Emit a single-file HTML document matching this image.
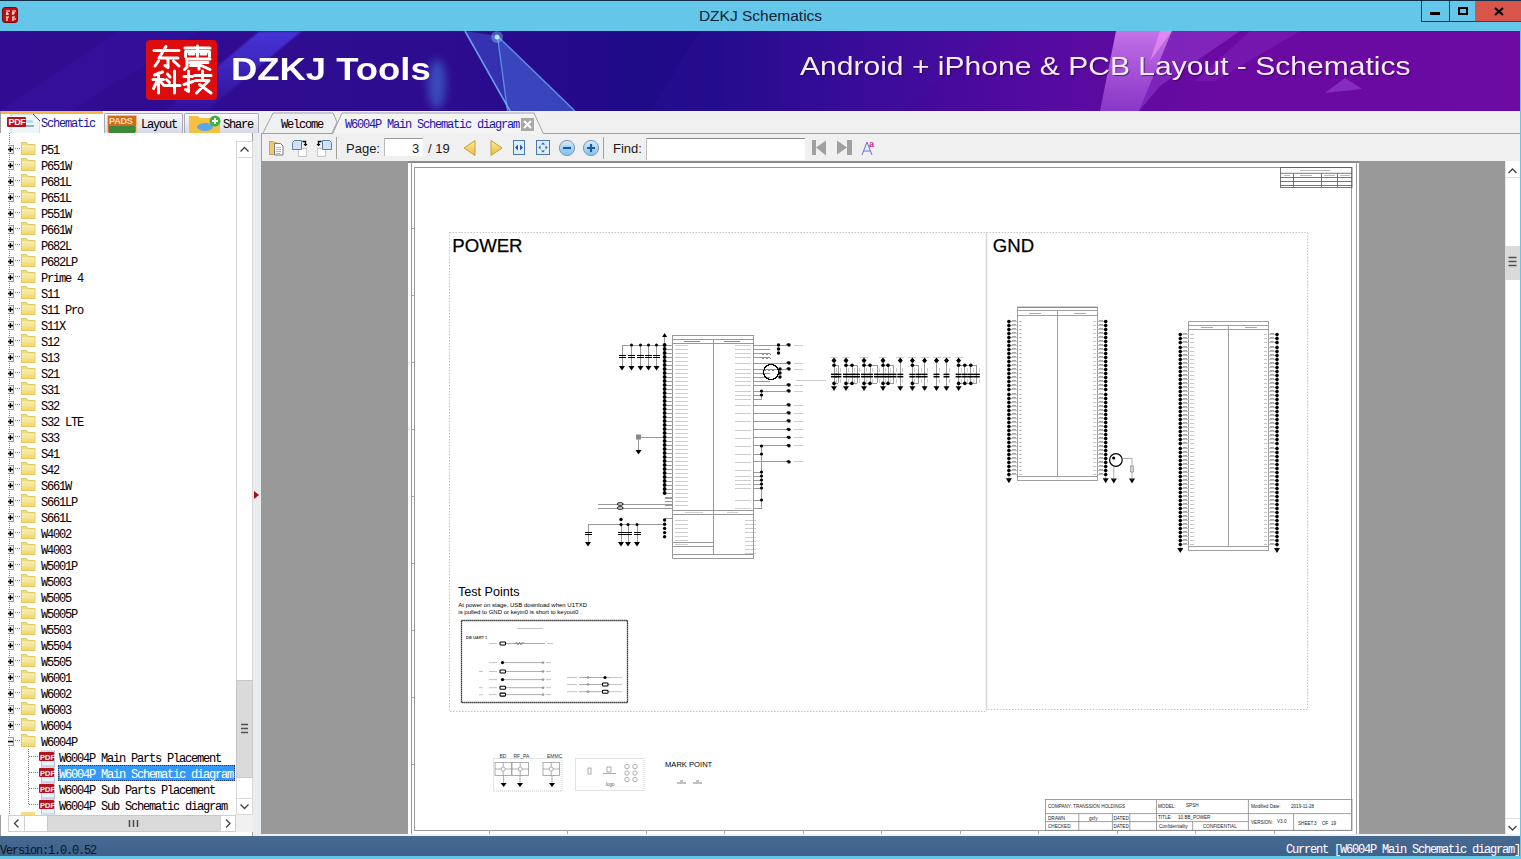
<!DOCTYPE html><html><head><meta charset="utf-8"><style>
*{box-sizing:border-box;margin:0;padding:0}
html,body{width:1521px;height:859px;overflow:hidden;background:#f0f0f0;font-family:"Liberation Sans",sans-serif}
.a{position:absolute}
.mono{font-family:"Liberation Mono",monospace;white-space:pre}
.tr{position:absolute;font-family:"Liberation Mono",monospace;font-size:12px;letter-spacing:-1.2px;color:#000;white-space:pre;line-height:14px;-webkit-text-stroke:.05px}
</style></head><body><div class="a" style="left:0;top:0;width:1521px;height:31px;background:#64c7ea;border-top:1px solid #10304a"></div>
<div class="a" style="left:2px;top:7px;width:16px;height:16px;background:#c40d12;border-radius:3px;border:1px solid #7a0a0a"></div>
<svg class="a" style="left:2px;top:7px" width="16" height="16"><g stroke="#fff" stroke-width="1.2" fill="none"><path d="M4 4h4M5 5v3M4 7h3M10 4h4M11 5v3M10 6h3M4 10h3M5 10v4M10 10h3M11 10v4M12 12h2"/></g></svg>
<div class="a" style="left:0;top:7.2px;width:1521px;text-align:center;font-size:15.5px;color:#0d2236">DZKJ Schematics</div>
<div class="a" style="left:1421px;top:1px;width:29px;height:21px;border:1px solid #0b3550;border-top:none"></div>
<div class="a" style="left:1449px;top:1px;width:27px;height:21px;border:1px solid #0b3550;border-top:none;border-left:none"></div>
<div class="a" style="left:1475px;top:1px;width:46px;height:21px;background:#d9554a;border-bottom:1px solid #7a2a20"></div>
<div class="a" style="left:1430px;top:12px;width:10px;height:3px;background:#000"></div>
<div class="a" style="left:1458px;top:7px;width:10px;height:8px;border:2px solid #000;border-top-width:2px"></div>
<svg class="a" style="left:1494px;top:7px" width="10" height="9"><path d="M1 1l8 7M9 1l-8 7" stroke="#000" stroke-width="2.2"/></svg>
<div class="a" style="left:0;top:31px;width:1520px;height:80px;overflow:hidden;background:linear-gradient(90deg,#310c92 0%,#2e0c90 28%,#260a8c 36%,#1f0a88 42%,#220a8a 47%,#380a96 56%,#540aa0 68%,#6a0aa2 80%,#6c0aa2 100%)">
<div class="a" style="left:428px;top:28px;width:18px;height:50px;border-radius:50%;background:rgba(70,150,240,.45);filter:blur(4px)"></div>
<div class="a" style="left:212px;top:0;width:42px;height:80px;background:linear-gradient(rgba(80,70,245,.7),rgba(60,40,220,.1));transform:skewX(-50deg);filter:blur(1.5px)"></div>
<svg class="a" style="left:0;top:0" width="1520" height="80">
<polygon points="465,0 510,80 575,80 497,5" fill="rgba(80,140,255,.30)"/>
<polygon points="497,5 507,80 575,80" fill="rgba(90,160,255,.18)"/>
<line x1="465" y1="0" x2="510" y2="80" stroke="rgba(120,190,255,.8)" stroke-width="1.6"/>
<line x1="497.5" y1="5" x2="575" y2="80" stroke="rgba(120,190,255,.65)" stroke-width="1.5"/>
<line x1="497.5" y1="5" x2="507.5" y2="80" stroke="rgba(120,190,255,.6)" stroke-width="1.3"/>
<circle cx="497" cy="6" r="6" fill="rgba(150,230,255,.35)"/><circle cx="497" cy="6" r="2.5" fill="rgba(210,250,255,.8)"/>

<defs><linearGradient id="lb" x1="0" y1="0" x2="0" y2="1"><stop offset="0" stop-color="rgba(230,150,255,.75)"/><stop offset="1" stop-color="rgba(190,110,245,.45)"/></linearGradient></defs>
<polygon points="1116,0 1172,0 1139,80 1100,80" fill="url(#lb)"/>
<polygon points="1160,0 1172,0 1150,30" fill="rgba(255,160,255,.5)"/>
<polygon points="1172,0 1240,0 1160,55 1139,80" fill="rgba(175,85,235,.35)"/>
<polygon points="1250,0 1300,0 1215,50 1195,50" fill="rgba(160,70,220,.22)"/>
<polygon points="1325,62 1362,58 1345,47" fill="rgba(175,95,235,.4)"/>
<polygon points="120,0 200,0 70,80 0,80" fill="rgba(70,40,210,.12)"/>
<polygon points="700,0 1000,0 900,80 650,80" fill="rgba(60,30,170,.12)"/>
</svg>
</div>
<div class="a" style="left:146px;top:40px;width:71px;height:60px;background:#dd0d0d;border-radius:4px"></div>
<svg class="a" style="left:0;top:0" width="230" height="110"><g stroke="#fff" stroke-width="3" fill="none" stroke-linecap="round" stroke-linejoin="round"><path d="M154 50.5H179M166 46.5L159 58H178M168 58V67.5L165 65.5M158.5 61L155 66M173.5 61L179 66"/><path d="M185 48H210M197.5 46V56M185.5 51.5V56.5M185.5 51.5H209.5V56.5M189 54H194M201 54H206M186.5 59H210M187 59V67L184.5 69.5M190 62.5H208M190.5 65.5H198M199 62.5V69M200 65L210 69.5"/><path d="M154.5 75L162.5 72M153 79.5H163.5M158.5 73V93M157.5 80.5L153.5 88.5M159.5 80.5L163.5 85M167.5 74L170 77M166.5 79.5L169.5 82.5M164.5 85.5H180M174.5 71V93"/><path d="M184 76.5H192.5M188.5 71V91.5L185.5 89.5M184 84.5L193 81.5M194.5 75.5H211M202.5 71V79M195.5 80.5H209L196.5 93M199.5 84.5L211 93"/></g></svg>
<div class="a" style="left:231px;top:52px;font-size:31px;font-weight:bold;color:#fff;white-space:nowrap;transform:scaleX(1.175);transform-origin:0 0" id="dzkj">DZKJ Tools</div>
<div class="a" style="left:800px;top:51px;font-size:26.5px;transform:scaleX(1.134);transform-origin:0 0;color:#f4ecf8;white-space:nowrap;text-shadow:1px 1px 1px rgba(40,0,60,.6)" id="andr">Android + iPhone &amp; PCB Layout - Schematics</div>
<div class="a" style="left:1520px;top:31px;width:1px;height:828px;background:#64c7ea"></div>
<div class="a" style="left:0;top:111px;width:1520px;height:22px;background:#f0f0f0"></div>
<div class="a" style="left:0;top:111px;width:104px;height:23px;background:#fff;border-left:1px solid #a0a0a0"></div>
<div class="a" style="left:1px;top:111px;width:102px;height:3px;background:#f4b63e"></div>
<svg class="a" style="left:6px;top:113px" width="34" height="21"><path d="M5 1h22l7 7v13H5z" fill="#eef6fc" stroke="#b8c8d8"/><path d="M27 1l7 7" stroke="#445" stroke-width="1"/><rect x="10" y="12" width="18" height="2" fill="#9ab"/><rect x="15" y="7" width="12" height="3" fill="#bde"/></svg>
<div class="a" style="left:7px;top:117px;width:19px;height:10px;background:#b8101c;border-radius:1px"></div>
<div class="a" style="left:8px;top:116.5px;width:18px;font-size:9px;font-weight:bold;color:#fff;line-height:10px;text-align:center;letter-spacing:-.3px">PDF</div>
<div class="tr" style="left:41px;top:117px;color:#1a1a9a">Schematic</div>
<div class="a" style="left:104px;top:113px;width:79px;height:20px;background:linear-gradient(#fbfbfd,#d6d9e6);border:1px solid #a8aab4;border-bottom:none;border-radius:2px 2px 0 0"></div>
<div class="a" style="left:107px;top:115px;width:30px;height:18px;background:#d2691e;border:1px solid #f5c080"></div>
<div class="a" style="left:109px;top:116px;font-size:9px;font-weight:bold;color:#fde0b0;line-height:10px;letter-spacing:-.2px">PADS</div>
<div class="a" style="left:109px;top:126px;width:26px;height:7px;background:#3a8a3a"></div>
<div class="tr" style="left:141px;top:118px">Layout</div>
<div class="a" style="left:184px;top:113px;width:75px;height:20px;background:linear-gradient(#fbfbfd,#d6d9e6);border:1px solid #a8aab4;border-bottom:none;border-radius:2px 2px 0 0"></div>
<svg class="a" style="left:189px;top:114px" width="34" height="19"><path d="M0 2h9l2 2h20v15H0z" fill="#f8c040"/><ellipse cx="16" cy="13" rx="8" ry="4" fill="#5aa8e8"/><circle cx="26" cy="7" r="5.5" fill="#3cb43c"/><path d="M26 4v6M23 7h6" stroke="#fff" stroke-width="2"/></svg>
<div class="tr" style="left:223px;top:118px">Share</div>
<svg class="a" style="left:255px;top:111px" width="300" height="24"><path d="M8 22 L18 2 H78 L82 11 L77 22" fill="#eef0f2" stroke="#a0a4a8" stroke-width="1"/><path d="M78 22 L87 2 H279 L288 22" fill="#f4f4f4" stroke="#a0a4a8" stroke-width="1"/><rect x="266" y="7" width="13" height="13" fill="#a8a8a8"/><path d="M269 10l7 7M276 10l-7 7" stroke="#fff" stroke-width="2"/></svg>
<div class="tr" style="left:281px;top:118px">Welcome</div>
<div class="tr" style="left:345px;top:118px;color:#1a1ab4">W6004P Main Schematic diagram</div>
<div class="a" style="left:0;top:133px;width:253px;height:703px;background:#fff;border-left:1px solid #a0a0a0;border-right:1px solid #a0a0a0"></div>
<div class="a" style="left:253px;top:133px;width:8px;height:703px;background:#e9edf0"></div>
<svg class="a" style="left:253px;top:490px" width="8" height="10"><path d="M1 1l5 4l-5 4z" fill="#a01018"/></svg>
<svg class="a" style="left:0;top:133px" width="236" height="682"><defs><linearGradient id="fg" x1="0" y1="0" x2="0" y2="1"><stop offset="0" stop-color="#fbf0b8"/><stop offset="1" stop-color="#f0d868"/></linearGradient></defs><line x1="9.5" y1="0" x2="9.5" y2="682" stroke="#808080" stroke-dasharray="1,1"/><rect x="5.5" y="12.5" width="8" height="8" fill="#f2f2f2" stroke="#9a9a9a"/><rect x="8" y="15.8" width="5" height="1.5" fill="#000"/><rect x="9.6" y="14" width="1.5" height="5" fill="#000"/><line x1="15" y1="15.5" x2="21" y2="15.5" stroke="#808080" stroke-dasharray="1,1"/><path d="M21.5 9.5 h5 l1.5 2 h7 v10 h-13.5z" fill="#f4dc7c" stroke="#e2c468" stroke-width="1"/><rect x="22" y="12.5" width="12.5" height="8.5" fill="url(#fg)"/><rect x="5.5" y="28.5" width="8" height="8" fill="#f2f2f2" stroke="#9a9a9a"/><rect x="8" y="31.8" width="5" height="1.5" fill="#000"/><rect x="9.6" y="30" width="1.5" height="5" fill="#000"/><line x1="15" y1="31.5" x2="21" y2="31.5" stroke="#808080" stroke-dasharray="1,1"/><path d="M21.5 25.5 h5 l1.5 2 h7 v10 h-13.5z" fill="#f4dc7c" stroke="#e2c468" stroke-width="1"/><rect x="22" y="28.5" width="12.5" height="8.5" fill="url(#fg)"/><rect x="5.5" y="44.5" width="8" height="8" fill="#f2f2f2" stroke="#9a9a9a"/><rect x="8" y="47.8" width="5" height="1.5" fill="#000"/><rect x="9.6" y="46" width="1.5" height="5" fill="#000"/><line x1="15" y1="47.5" x2="21" y2="47.5" stroke="#808080" stroke-dasharray="1,1"/><path d="M21.5 41.5 h5 l1.5 2 h7 v10 h-13.5z" fill="#f4dc7c" stroke="#e2c468" stroke-width="1"/><rect x="22" y="44.5" width="12.5" height="8.5" fill="url(#fg)"/><rect x="5.5" y="60.5" width="8" height="8" fill="#f2f2f2" stroke="#9a9a9a"/><rect x="8" y="63.8" width="5" height="1.5" fill="#000"/><rect x="9.6" y="62" width="1.5" height="5" fill="#000"/><line x1="15" y1="63.5" x2="21" y2="63.5" stroke="#808080" stroke-dasharray="1,1"/><path d="M21.5 57.5 h5 l1.5 2 h7 v10 h-13.5z" fill="#f4dc7c" stroke="#e2c468" stroke-width="1"/><rect x="22" y="60.5" width="12.5" height="8.5" fill="url(#fg)"/><rect x="5.5" y="76.5" width="8" height="8" fill="#f2f2f2" stroke="#9a9a9a"/><rect x="8" y="79.8" width="5" height="1.5" fill="#000"/><rect x="9.6" y="78" width="1.5" height="5" fill="#000"/><line x1="15" y1="79.5" x2="21" y2="79.5" stroke="#808080" stroke-dasharray="1,1"/><path d="M21.5 73.5 h5 l1.5 2 h7 v10 h-13.5z" fill="#f4dc7c" stroke="#e2c468" stroke-width="1"/><rect x="22" y="76.5" width="12.5" height="8.5" fill="url(#fg)"/><rect x="5.5" y="92.5" width="8" height="8" fill="#f2f2f2" stroke="#9a9a9a"/><rect x="8" y="95.8" width="5" height="1.5" fill="#000"/><rect x="9.6" y="94" width="1.5" height="5" fill="#000"/><line x1="15" y1="95.5" x2="21" y2="95.5" stroke="#808080" stroke-dasharray="1,1"/><path d="M21.5 89.5 h5 l1.5 2 h7 v10 h-13.5z" fill="#f4dc7c" stroke="#e2c468" stroke-width="1"/><rect x="22" y="92.5" width="12.5" height="8.5" fill="url(#fg)"/><rect x="5.5" y="108.5" width="8" height="8" fill="#f2f2f2" stroke="#9a9a9a"/><rect x="8" y="111.8" width="5" height="1.5" fill="#000"/><rect x="9.6" y="110" width="1.5" height="5" fill="#000"/><line x1="15" y1="111.5" x2="21" y2="111.5" stroke="#808080" stroke-dasharray="1,1"/><path d="M21.5 105.5 h5 l1.5 2 h7 v10 h-13.5z" fill="#f4dc7c" stroke="#e2c468" stroke-width="1"/><rect x="22" y="108.5" width="12.5" height="8.5" fill="url(#fg)"/><rect x="5.5" y="124.5" width="8" height="8" fill="#f2f2f2" stroke="#9a9a9a"/><rect x="8" y="127.8" width="5" height="1.5" fill="#000"/><rect x="9.6" y="126" width="1.5" height="5" fill="#000"/><line x1="15" y1="127.5" x2="21" y2="127.5" stroke="#808080" stroke-dasharray="1,1"/><path d="M21.5 121.5 h5 l1.5 2 h7 v10 h-13.5z" fill="#f4dc7c" stroke="#e2c468" stroke-width="1"/><rect x="22" y="124.5" width="12.5" height="8.5" fill="url(#fg)"/><rect x="5.5" y="140.5" width="8" height="8" fill="#f2f2f2" stroke="#9a9a9a"/><rect x="8" y="143.8" width="5" height="1.5" fill="#000"/><rect x="9.6" y="142" width="1.5" height="5" fill="#000"/><line x1="15" y1="143.5" x2="21" y2="143.5" stroke="#808080" stroke-dasharray="1,1"/><path d="M21.5 137.5 h5 l1.5 2 h7 v10 h-13.5z" fill="#f4dc7c" stroke="#e2c468" stroke-width="1"/><rect x="22" y="140.5" width="12.5" height="8.5" fill="url(#fg)"/><rect x="5.5" y="156.5" width="8" height="8" fill="#f2f2f2" stroke="#9a9a9a"/><rect x="8" y="159.8" width="5" height="1.5" fill="#000"/><rect x="9.6" y="158" width="1.5" height="5" fill="#000"/><line x1="15" y1="159.5" x2="21" y2="159.5" stroke="#808080" stroke-dasharray="1,1"/><path d="M21.5 153.5 h5 l1.5 2 h7 v10 h-13.5z" fill="#f4dc7c" stroke="#e2c468" stroke-width="1"/><rect x="22" y="156.5" width="12.5" height="8.5" fill="url(#fg)"/><rect x="5.5" y="172.5" width="8" height="8" fill="#f2f2f2" stroke="#9a9a9a"/><rect x="8" y="175.8" width="5" height="1.5" fill="#000"/><rect x="9.6" y="174" width="1.5" height="5" fill="#000"/><line x1="15" y1="175.5" x2="21" y2="175.5" stroke="#808080" stroke-dasharray="1,1"/><path d="M21.5 169.5 h5 l1.5 2 h7 v10 h-13.5z" fill="#f4dc7c" stroke="#e2c468" stroke-width="1"/><rect x="22" y="172.5" width="12.5" height="8.5" fill="url(#fg)"/><rect x="5.5" y="188.5" width="8" height="8" fill="#f2f2f2" stroke="#9a9a9a"/><rect x="8" y="191.8" width="5" height="1.5" fill="#000"/><rect x="9.6" y="190" width="1.5" height="5" fill="#000"/><line x1="15" y1="191.5" x2="21" y2="191.5" stroke="#808080" stroke-dasharray="1,1"/><path d="M21.5 185.5 h5 l1.5 2 h7 v10 h-13.5z" fill="#f4dc7c" stroke="#e2c468" stroke-width="1"/><rect x="22" y="188.5" width="12.5" height="8.5" fill="url(#fg)"/><rect x="5.5" y="204.5" width="8" height="8" fill="#f2f2f2" stroke="#9a9a9a"/><rect x="8" y="207.8" width="5" height="1.5" fill="#000"/><rect x="9.6" y="206" width="1.5" height="5" fill="#000"/><line x1="15" y1="207.5" x2="21" y2="207.5" stroke="#808080" stroke-dasharray="1,1"/><path d="M21.5 201.5 h5 l1.5 2 h7 v10 h-13.5z" fill="#f4dc7c" stroke="#e2c468" stroke-width="1"/><rect x="22" y="204.5" width="12.5" height="8.5" fill="url(#fg)"/><rect x="5.5" y="220.5" width="8" height="8" fill="#f2f2f2" stroke="#9a9a9a"/><rect x="8" y="223.8" width="5" height="1.5" fill="#000"/><rect x="9.6" y="222" width="1.5" height="5" fill="#000"/><line x1="15" y1="223.5" x2="21" y2="223.5" stroke="#808080" stroke-dasharray="1,1"/><path d="M21.5 217.5 h5 l1.5 2 h7 v10 h-13.5z" fill="#f4dc7c" stroke="#e2c468" stroke-width="1"/><rect x="22" y="220.5" width="12.5" height="8.5" fill="url(#fg)"/><rect x="5.5" y="236.5" width="8" height="8" fill="#f2f2f2" stroke="#9a9a9a"/><rect x="8" y="239.8" width="5" height="1.5" fill="#000"/><rect x="9.6" y="238" width="1.5" height="5" fill="#000"/><line x1="15" y1="239.5" x2="21" y2="239.5" stroke="#808080" stroke-dasharray="1,1"/><path d="M21.5 233.5 h5 l1.5 2 h7 v10 h-13.5z" fill="#f4dc7c" stroke="#e2c468" stroke-width="1"/><rect x="22" y="236.5" width="12.5" height="8.5" fill="url(#fg)"/><rect x="5.5" y="252.5" width="8" height="8" fill="#f2f2f2" stroke="#9a9a9a"/><rect x="8" y="255.8" width="5" height="1.5" fill="#000"/><rect x="9.6" y="254" width="1.5" height="5" fill="#000"/><line x1="15" y1="255.5" x2="21" y2="255.5" stroke="#808080" stroke-dasharray="1,1"/><path d="M21.5 249.5 h5 l1.5 2 h7 v10 h-13.5z" fill="#f4dc7c" stroke="#e2c468" stroke-width="1"/><rect x="22" y="252.5" width="12.5" height="8.5" fill="url(#fg)"/><rect x="5.5" y="268.5" width="8" height="8" fill="#f2f2f2" stroke="#9a9a9a"/><rect x="8" y="271.8" width="5" height="1.5" fill="#000"/><rect x="9.6" y="270" width="1.5" height="5" fill="#000"/><line x1="15" y1="271.5" x2="21" y2="271.5" stroke="#808080" stroke-dasharray="1,1"/><path d="M21.5 265.5 h5 l1.5 2 h7 v10 h-13.5z" fill="#f4dc7c" stroke="#e2c468" stroke-width="1"/><rect x="22" y="268.5" width="12.5" height="8.5" fill="url(#fg)"/><rect x="5.5" y="284.5" width="8" height="8" fill="#f2f2f2" stroke="#9a9a9a"/><rect x="8" y="287.8" width="5" height="1.5" fill="#000"/><rect x="9.6" y="286" width="1.5" height="5" fill="#000"/><line x1="15" y1="287.5" x2="21" y2="287.5" stroke="#808080" stroke-dasharray="1,1"/><path d="M21.5 281.5 h5 l1.5 2 h7 v10 h-13.5z" fill="#f4dc7c" stroke="#e2c468" stroke-width="1"/><rect x="22" y="284.5" width="12.5" height="8.5" fill="url(#fg)"/><rect x="5.5" y="300.5" width="8" height="8" fill="#f2f2f2" stroke="#9a9a9a"/><rect x="8" y="303.8" width="5" height="1.5" fill="#000"/><rect x="9.6" y="302" width="1.5" height="5" fill="#000"/><line x1="15" y1="303.5" x2="21" y2="303.5" stroke="#808080" stroke-dasharray="1,1"/><path d="M21.5 297.5 h5 l1.5 2 h7 v10 h-13.5z" fill="#f4dc7c" stroke="#e2c468" stroke-width="1"/><rect x="22" y="300.5" width="12.5" height="8.5" fill="url(#fg)"/><rect x="5.5" y="316.5" width="8" height="8" fill="#f2f2f2" stroke="#9a9a9a"/><rect x="8" y="319.8" width="5" height="1.5" fill="#000"/><rect x="9.6" y="318" width="1.5" height="5" fill="#000"/><line x1="15" y1="319.5" x2="21" y2="319.5" stroke="#808080" stroke-dasharray="1,1"/><path d="M21.5 313.5 h5 l1.5 2 h7 v10 h-13.5z" fill="#f4dc7c" stroke="#e2c468" stroke-width="1"/><rect x="22" y="316.5" width="12.5" height="8.5" fill="url(#fg)"/><rect x="5.5" y="332.5" width="8" height="8" fill="#f2f2f2" stroke="#9a9a9a"/><rect x="8" y="335.8" width="5" height="1.5" fill="#000"/><rect x="9.6" y="334" width="1.5" height="5" fill="#000"/><line x1="15" y1="335.5" x2="21" y2="335.5" stroke="#808080" stroke-dasharray="1,1"/><path d="M21.5 329.5 h5 l1.5 2 h7 v10 h-13.5z" fill="#f4dc7c" stroke="#e2c468" stroke-width="1"/><rect x="22" y="332.5" width="12.5" height="8.5" fill="url(#fg)"/><rect x="5.5" y="348.5" width="8" height="8" fill="#f2f2f2" stroke="#9a9a9a"/><rect x="8" y="351.8" width="5" height="1.5" fill="#000"/><rect x="9.6" y="350" width="1.5" height="5" fill="#000"/><line x1="15" y1="351.5" x2="21" y2="351.5" stroke="#808080" stroke-dasharray="1,1"/><path d="M21.5 345.5 h5 l1.5 2 h7 v10 h-13.5z" fill="#f4dc7c" stroke="#e2c468" stroke-width="1"/><rect x="22" y="348.5" width="12.5" height="8.5" fill="url(#fg)"/><rect x="5.5" y="364.5" width="8" height="8" fill="#f2f2f2" stroke="#9a9a9a"/><rect x="8" y="367.8" width="5" height="1.5" fill="#000"/><rect x="9.6" y="366" width="1.5" height="5" fill="#000"/><line x1="15" y1="367.5" x2="21" y2="367.5" stroke="#808080" stroke-dasharray="1,1"/><path d="M21.5 361.5 h5 l1.5 2 h7 v10 h-13.5z" fill="#f4dc7c" stroke="#e2c468" stroke-width="1"/><rect x="22" y="364.5" width="12.5" height="8.5" fill="url(#fg)"/><rect x="5.5" y="380.5" width="8" height="8" fill="#f2f2f2" stroke="#9a9a9a"/><rect x="8" y="383.8" width="5" height="1.5" fill="#000"/><rect x="9.6" y="382" width="1.5" height="5" fill="#000"/><line x1="15" y1="383.5" x2="21" y2="383.5" stroke="#808080" stroke-dasharray="1,1"/><path d="M21.5 377.5 h5 l1.5 2 h7 v10 h-13.5z" fill="#f4dc7c" stroke="#e2c468" stroke-width="1"/><rect x="22" y="380.5" width="12.5" height="8.5" fill="url(#fg)"/><rect x="5.5" y="396.5" width="8" height="8" fill="#f2f2f2" stroke="#9a9a9a"/><rect x="8" y="399.8" width="5" height="1.5" fill="#000"/><rect x="9.6" y="398" width="1.5" height="5" fill="#000"/><line x1="15" y1="399.5" x2="21" y2="399.5" stroke="#808080" stroke-dasharray="1,1"/><path d="M21.5 393.5 h5 l1.5 2 h7 v10 h-13.5z" fill="#f4dc7c" stroke="#e2c468" stroke-width="1"/><rect x="22" y="396.5" width="12.5" height="8.5" fill="url(#fg)"/><rect x="5.5" y="412.5" width="8" height="8" fill="#f2f2f2" stroke="#9a9a9a"/><rect x="8" y="415.8" width="5" height="1.5" fill="#000"/><rect x="9.6" y="414" width="1.5" height="5" fill="#000"/><line x1="15" y1="415.5" x2="21" y2="415.5" stroke="#808080" stroke-dasharray="1,1"/><path d="M21.5 409.5 h5 l1.5 2 h7 v10 h-13.5z" fill="#f4dc7c" stroke="#e2c468" stroke-width="1"/><rect x="22" y="412.5" width="12.5" height="8.5" fill="url(#fg)"/><rect x="5.5" y="428.5" width="8" height="8" fill="#f2f2f2" stroke="#9a9a9a"/><rect x="8" y="431.8" width="5" height="1.5" fill="#000"/><rect x="9.6" y="430" width="1.5" height="5" fill="#000"/><line x1="15" y1="431.5" x2="21" y2="431.5" stroke="#808080" stroke-dasharray="1,1"/><path d="M21.5 425.5 h5 l1.5 2 h7 v10 h-13.5z" fill="#f4dc7c" stroke="#e2c468" stroke-width="1"/><rect x="22" y="428.5" width="12.5" height="8.5" fill="url(#fg)"/><rect x="5.5" y="444.5" width="8" height="8" fill="#f2f2f2" stroke="#9a9a9a"/><rect x="8" y="447.8" width="5" height="1.5" fill="#000"/><rect x="9.6" y="446" width="1.5" height="5" fill="#000"/><line x1="15" y1="447.5" x2="21" y2="447.5" stroke="#808080" stroke-dasharray="1,1"/><path d="M21.5 441.5 h5 l1.5 2 h7 v10 h-13.5z" fill="#f4dc7c" stroke="#e2c468" stroke-width="1"/><rect x="22" y="444.5" width="12.5" height="8.5" fill="url(#fg)"/><rect x="5.5" y="460.5" width="8" height="8" fill="#f2f2f2" stroke="#9a9a9a"/><rect x="8" y="463.8" width="5" height="1.5" fill="#000"/><rect x="9.6" y="462" width="1.5" height="5" fill="#000"/><line x1="15" y1="463.5" x2="21" y2="463.5" stroke="#808080" stroke-dasharray="1,1"/><path d="M21.5 457.5 h5 l1.5 2 h7 v10 h-13.5z" fill="#f4dc7c" stroke="#e2c468" stroke-width="1"/><rect x="22" y="460.5" width="12.5" height="8.5" fill="url(#fg)"/><rect x="5.5" y="476.5" width="8" height="8" fill="#f2f2f2" stroke="#9a9a9a"/><rect x="8" y="479.8" width="5" height="1.5" fill="#000"/><rect x="9.6" y="478" width="1.5" height="5" fill="#000"/><line x1="15" y1="479.5" x2="21" y2="479.5" stroke="#808080" stroke-dasharray="1,1"/><path d="M21.5 473.5 h5 l1.5 2 h7 v10 h-13.5z" fill="#f4dc7c" stroke="#e2c468" stroke-width="1"/><rect x="22" y="476.5" width="12.5" height="8.5" fill="url(#fg)"/><rect x="5.5" y="492.5" width="8" height="8" fill="#f2f2f2" stroke="#9a9a9a"/><rect x="8" y="495.8" width="5" height="1.5" fill="#000"/><rect x="9.6" y="494" width="1.5" height="5" fill="#000"/><line x1="15" y1="495.5" x2="21" y2="495.5" stroke="#808080" stroke-dasharray="1,1"/><path d="M21.5 489.5 h5 l1.5 2 h7 v10 h-13.5z" fill="#f4dc7c" stroke="#e2c468" stroke-width="1"/><rect x="22" y="492.5" width="12.5" height="8.5" fill="url(#fg)"/><rect x="5.5" y="508.5" width="8" height="8" fill="#f2f2f2" stroke="#9a9a9a"/><rect x="8" y="511.8" width="5" height="1.5" fill="#000"/><rect x="9.6" y="510" width="1.5" height="5" fill="#000"/><line x1="15" y1="511.5" x2="21" y2="511.5" stroke="#808080" stroke-dasharray="1,1"/><path d="M21.5 505.5 h5 l1.5 2 h7 v10 h-13.5z" fill="#f4dc7c" stroke="#e2c468" stroke-width="1"/><rect x="22" y="508.5" width="12.5" height="8.5" fill="url(#fg)"/><rect x="5.5" y="524.5" width="8" height="8" fill="#f2f2f2" stroke="#9a9a9a"/><rect x="8" y="527.8" width="5" height="1.5" fill="#000"/><rect x="9.6" y="526" width="1.5" height="5" fill="#000"/><line x1="15" y1="527.5" x2="21" y2="527.5" stroke="#808080" stroke-dasharray="1,1"/><path d="M21.5 521.5 h5 l1.5 2 h7 v10 h-13.5z" fill="#f4dc7c" stroke="#e2c468" stroke-width="1"/><rect x="22" y="524.5" width="12.5" height="8.5" fill="url(#fg)"/><rect x="5.5" y="540.5" width="8" height="8" fill="#f2f2f2" stroke="#9a9a9a"/><rect x="8" y="543.8" width="5" height="1.5" fill="#000"/><rect x="9.6" y="542" width="1.5" height="5" fill="#000"/><line x1="15" y1="543.5" x2="21" y2="543.5" stroke="#808080" stroke-dasharray="1,1"/><path d="M21.5 537.5 h5 l1.5 2 h7 v10 h-13.5z" fill="#f4dc7c" stroke="#e2c468" stroke-width="1"/><rect x="22" y="540.5" width="12.5" height="8.5" fill="url(#fg)"/><rect x="5.5" y="556.5" width="8" height="8" fill="#f2f2f2" stroke="#9a9a9a"/><rect x="8" y="559.8" width="5" height="1.5" fill="#000"/><rect x="9.6" y="558" width="1.5" height="5" fill="#000"/><line x1="15" y1="559.5" x2="21" y2="559.5" stroke="#808080" stroke-dasharray="1,1"/><path d="M21.5 553.5 h5 l1.5 2 h7 v10 h-13.5z" fill="#f4dc7c" stroke="#e2c468" stroke-width="1"/><rect x="22" y="556.5" width="12.5" height="8.5" fill="url(#fg)"/><rect x="5.5" y="572.5" width="8" height="8" fill="#f2f2f2" stroke="#9a9a9a"/><rect x="8" y="575.8" width="5" height="1.5" fill="#000"/><rect x="9.6" y="574" width="1.5" height="5" fill="#000"/><line x1="15" y1="575.5" x2="21" y2="575.5" stroke="#808080" stroke-dasharray="1,1"/><path d="M21.5 569.5 h5 l1.5 2 h7 v10 h-13.5z" fill="#f4dc7c" stroke="#e2c468" stroke-width="1"/><rect x="22" y="572.5" width="12.5" height="8.5" fill="url(#fg)"/><rect x="5.5" y="588.5" width="8" height="8" fill="#f2f2f2" stroke="#9a9a9a"/><rect x="8" y="591.8" width="5" height="1.5" fill="#000"/><rect x="9.6" y="590" width="1.5" height="5" fill="#000"/><line x1="15" y1="591.5" x2="21" y2="591.5" stroke="#808080" stroke-dasharray="1,1"/><path d="M21.5 585.5 h5 l1.5 2 h7 v10 h-13.5z" fill="#f4dc7c" stroke="#e2c468" stroke-width="1"/><rect x="22" y="588.5" width="12.5" height="8.5" fill="url(#fg)"/><rect x="5.5" y="604.5" width="8" height="8" fill="#f2f2f2" stroke="#9a9a9a"/><rect x="8" y="607.8" width="5" height="1.5" fill="#000"/><line x1="15" y1="607.5" x2="21" y2="607.5" stroke="#808080" stroke-dasharray="1,1"/><path d="M21.5 601.5 h5 l1.5 2 h7 v10 h-13.5z" fill="#f4dc7c" stroke="#e2c468" stroke-width="1"/><rect x="22" y="604.5" width="12.5" height="8.5" fill="url(#fg)"/><rect x="0" y="0" width="8" height="682" fill="#fff"/><line x1="28.5" y1="616" x2="28.5" y2="672" stroke="#808080" stroke-dasharray="1,1"/><line x1="29" y1="623.5" x2="39" y2="623.5" stroke="#808080" stroke-dasharray="1,1"/><rect x="41.5" y="618" width="13" height="15" fill="#e8f2fa" stroke="#b0c4d8"/><rect x="39" y="619" width="15" height="9" fill="#b8101c" rx="1"/><text x="40" y="626.5" font-size="7.5" font-weight="bold" fill="#fff" font-family="Liberation Sans">PDF</text><line x1="29" y1="639.5" x2="39" y2="639.5" stroke="#808080" stroke-dasharray="1,1"/><rect x="41.5" y="634" width="13" height="15" fill="#e8f2fa" stroke="#b0c4d8"/><rect x="39" y="635" width="15" height="9" fill="#b8101c" rx="1"/><text x="40" y="642.5" font-size="7.5" font-weight="bold" fill="#fff" font-family="Liberation Sans">PDF</text><line x1="29" y1="655.5" x2="39" y2="655.5" stroke="#808080" stroke-dasharray="1,1"/><rect x="41.5" y="650" width="13" height="15" fill="#e8f2fa" stroke="#b0c4d8"/><rect x="39" y="651" width="15" height="9" fill="#b8101c" rx="1"/><text x="40" y="658.5" font-size="7.5" font-weight="bold" fill="#fff" font-family="Liberation Sans">PDF</text><line x1="29" y1="671.5" x2="39" y2="671.5" stroke="#808080" stroke-dasharray="1,1"/><rect x="41.5" y="666" width="13" height="15" fill="#e8f2fa" stroke="#b0c4d8"/><rect x="39" y="667" width="15" height="9" fill="#b8101c" rx="1"/><text x="40" y="674.5" font-size="7.5" font-weight="bold" fill="#fff" font-family="Liberation Sans">PDF</text></svg>
<div class="tr" style="left:41px;top:144px">P51</div>
<div class="tr" style="left:41px;top:160px">P651W</div>
<div class="tr" style="left:41px;top:176px">P681L</div>
<div class="tr" style="left:41px;top:192px">P651L</div>
<div class="tr" style="left:41px;top:208px">P551W</div>
<div class="tr" style="left:41px;top:224px">P661W</div>
<div class="tr" style="left:41px;top:240px">P682L</div>
<div class="tr" style="left:41px;top:256px">P682LP</div>
<div class="tr" style="left:41px;top:272px">Prime 4</div>
<div class="tr" style="left:41px;top:288px">S11</div>
<div class="tr" style="left:41px;top:304px">S11 Pro</div>
<div class="tr" style="left:41px;top:320px">S11X</div>
<div class="tr" style="left:41px;top:336px">S12</div>
<div class="tr" style="left:41px;top:352px">S13</div>
<div class="tr" style="left:41px;top:368px">S21</div>
<div class="tr" style="left:41px;top:384px">S31</div>
<div class="tr" style="left:41px;top:400px">S32</div>
<div class="tr" style="left:41px;top:416px">S32 LTE</div>
<div class="tr" style="left:41px;top:432px">S33</div>
<div class="tr" style="left:41px;top:448px">S41</div>
<div class="tr" style="left:41px;top:464px">S42</div>
<div class="tr" style="left:41px;top:480px">S661W</div>
<div class="tr" style="left:41px;top:496px">S661LP</div>
<div class="tr" style="left:41px;top:512px">S661L</div>
<div class="tr" style="left:41px;top:528px">W4002</div>
<div class="tr" style="left:41px;top:544px">W4003</div>
<div class="tr" style="left:41px;top:560px">W5001P</div>
<div class="tr" style="left:41px;top:576px">W5003</div>
<div class="tr" style="left:41px;top:592px">W5005</div>
<div class="tr" style="left:41px;top:608px">W5005P</div>
<div class="tr" style="left:41px;top:624px">W5503</div>
<div class="tr" style="left:41px;top:640px">W5504</div>
<div class="tr" style="left:41px;top:656px">W5505</div>
<div class="tr" style="left:41px;top:672px">W6001</div>
<div class="tr" style="left:41px;top:688px">W6002</div>
<div class="tr" style="left:41px;top:704px">W6003</div>
<div class="tr" style="left:41px;top:720px">W6004</div>
<div class="tr" style="left:41px;top:736px">W6004P</div>
<div class="a" style="left:58px;top:765px;width:177px;height:16px;background:#3399ff;border:1px dotted #1a3a70"></div>
<div class="tr" style="left:59px;top:752px;color:#000">W6004P Main Parts Placement</div>
<div class="tr" style="left:59px;top:768px;color:#fff">W6004P Main Schematic diagram</div>
<div class="tr" style="left:59px;top:784px;color:#000">W6004P Sub Parts Placement</div>
<div class="tr" style="left:59px;top:800px;color:#000">W6004P Sub Schematic diagram</div>
<svg class="a" style="left:15px;top:812px" width="20" height="3"><rect x="6" y="0" width="14" height="3" fill="#f6dd84"/></svg>
<div class="a" style="left:236px;top:141px;width:17px;height:674px;background:#fff;border:1px solid #d8d8d8"></div>
<div class="a" style="left:236px;top:141px;width:17px;height:17px;border:1px solid #d8d8d8;background:#fff"></div>
<svg class="a" style="left:236px;top:141px" width="17" height="17"><path d="M4.5 10.5l4-4l4 4" stroke="#404040" stroke-width="1.3" fill="none"/></svg>
<div class="a" style="left:236px;top:680px;width:17px;height:98px;background:#dadada;border:1px solid #c8c8c8"></div>
<svg class="a" style="left:236px;top:680px" width="17" height="98"><path d="M5 44.5h7M5 48.5h7M5 52.5h7" stroke="#505050" stroke-width="1.6"/></svg>
<div class="a" style="left:236px;top:798px;width:17px;height:17px;border:1px solid #d8d8d8;background:#fff"></div>
<svg class="a" style="left:236px;top:798px" width="17" height="17"><path d="M4.5 6.5l4 4l4-4" stroke="#404040" stroke-width="1.3" fill="none"/></svg>
<div class="a" style="left:8px;top:815px;width:228px;height:17px;background:#fff;border:1px solid #d0d0d0"></div>
<div class="a" style="left:8px;top:815px;width:17px;height:17px;border:1px solid #d0d0d0;background:#fff"></div>
<svg class="a" style="left:8px;top:815px" width="17" height="17"><path d="M10.5 4.5l-4 4l4 4" stroke="#404040" stroke-width="1.3" fill="none"/></svg>
<div class="a" style="left:47px;top:815px;width:174px;height:17px;background:#dadada;border:1px solid #c8c8c8"></div>
<svg class="a" style="left:47px;top:815px" width="174" height="17"><path d="M82.5 5v7M86.5 5v7M90.5 5v7" stroke="#505050" stroke-width="1.6"/></svg>
<div class="a" style="left:220px;top:815px;width:16px;height:17px;border:1px solid #d0d0d0;background:#fff"></div>
<svg class="a" style="left:220px;top:815px" width="16" height="17"><path d="M6 4.5l4 4l-4 4" stroke="#404040" stroke-width="1.3" fill="none"/></svg>
<div class="a" style="left:236px;top:815px;width:17px;height:17px;background:#f0f0f0"></div>
<div class="a" style="left:261px;top:133px;width:1259px;height:28px;background:#f0f0f0;border-left:1px solid #a0a0a0"></div>
<div class="a" style="left:261px;top:133px;width:72px;height:1px;background:#a0a0a0"></div>
<div class="a" style="left:543px;top:133px;width:977px;height:1px;background:#a0a0a0"></div>
<svg class="a" style="left:262px;top:133px" width="620" height="28"><defs><linearGradient id="zg" x1="0" y1="0" x2="0" y2="1"><stop offset="0" stop-color="#d8ecfa"/><stop offset="1" stop-color="#7cc0f0"/></linearGradient><linearGradient id="ag" x1="0" y1="0" x2="0" y2="1"><stop offset="0" stop-color="#f8e8a0"/><stop offset="1" stop-color="#e8c040"/></linearGradient></defs><path d="M7.5 8.5 h4 l1 1 h2 v12 h-7z" fill="#ecc878" stroke="#c9a456"/><path d="M12.5 10.5h6l2.5 2.5v9h-8.5z" fill="#fff" stroke="#7a7a7a"/><path d="M14 14.5h5M14 16.5h5M14 18.5h5M14 20.5h4" stroke="#9aa" stroke-width=".8"/><path d="M36.5 15.5h8v8h-8z" fill="#fff" stroke="#c4c4c4"/><path d="M30.5 9.5l2-2h7v9h-9z" fill="#cde2f6" stroke="#5b7fa8"/><path d="M40.5 8.5h3v3" stroke="#000" stroke-width="1.4" fill="none"/><path d="M41.5 11l2 2.5l2-2.5z" fill="#000"/><path d="M63.5 15.5h-8v8h8z" fill="#fff" stroke="#c4c4c4"/><path d="M69.5 9.5l-2-2h-7v9h9z" fill="#cde2f6" stroke="#5b7fa8"/><path d="M59.5 8.5h-3v3" stroke="#000" stroke-width="1.4" fill="none"/><path d="M58.5 11l-2 2.5l-2-2.5z" fill="#000"/><line x1="74.5" y1="4" x2="74.5" y2="26" stroke="#a0a0a0"/><rect x="122" y="5" width="39" height="18" fill="#fff"/><line x1="122" y1="5.5" x2="161" y2="5.5" stroke="#999"/><line x1="122.5" y1="5" x2="122.5" y2="23" stroke="#bbb"/><path d="M213 7.5 L202 15 L213 22.5z" fill="url(#ag)" stroke="#c8a030"/><path d="M229 7.5 L240 15 L229 22.5z" fill="url(#ag)" stroke="#c8a030"/><rect x="251.5" y="7.5" width="11" height="14" fill="#dceefa" stroke="#4a78b0"/><path d="M256 11.5l-3 3l3 3zM258 11.5l3 3l-3 3z" fill="#2a5a9a"/><rect x="274.5" y="7.5" width="13" height="14" fill="#dceefa" stroke="#4a78b0"/><path d="M281 9.5l-2 2h4zM281 19.5l-2-2h4zM276.5 14.5l2-2v4zM285.5 14.5l-2-2v4z" fill="#2a5a9a"/><circle cx="305" cy="15" r="7.6" fill="url(#zg)" stroke="#8098a8"/><path d="M301 15h8" stroke="#1a5aa0" stroke-width="2.2"/><circle cx="329" cy="15" r="7.6" fill="url(#zg)" stroke="#8098a8"/><path d="M325 15h8M329 11v8" stroke="#1a5aa0" stroke-width="2.2"/><line x1="341.5" y1="4" x2="341.5" y2="26" stroke="#a0a0a0"/><rect x="384" y="5" width="159" height="22" fill="#fff"/><line x1="384" y1="5.5" x2="543" y2="5.5" stroke="#888"/><line x1="384.5" y1="5" x2="384.5" y2="27" stroke="#bbb"/><path d="M550 7h4v15h-4zM554 14.5l10-7v15z" fill="#a0a0a0"/><path d="M575 7.5l10 7l-10 7zM585 7h5v15h-5z" fill="#a0a0a0"/><path d="M600 22l5-13l5 13M602 18h6" stroke="#6a6ae0" stroke-width="1" fill="none"/><text x="607" y="14" font-size="9" font-weight="bold" fill="#d02090" font-family="Liberation Sans">a</text></svg>
<div class="a" style="left:346px;top:141px;font-size:13px;color:#1a1a1a;white-space:nowrap">Page:</div>
<div class="a" style="left:412px;top:141px;font-size:13px;color:#1a1a1a;white-space:nowrap">3</div>
<div class="a" style="left:428px;top:141px;font-size:13px;color:#1a1a1a;white-space:nowrap">/ 19</div>
<div class="a" style="left:613px;top:141px;font-size:13px;color:#1a1a1a;white-space:nowrap">Find:</div>
<div class="a" style="left:261px;top:161px;width:1244px;height:673px;background:#999"></div>
<div class="a" style="left:261px;top:834px;width:1259px;height:2px;background:#eef2f6"></div>
<div class="a" style="left:1505px;top:161px;width:15px;height:673px;background:#fff;border-left:1px solid #e8e8e8"></div>
<svg class="a" style="left:1505px;top:161px" width="15" height="675"><path d="M3.5 12l4-4l4 4" stroke="#404040" stroke-width="1.3" fill="none"/><line x1="0" y1="16.5" x2="15" y2="16.5" stroke="#e0e0e0"/><rect x="0" y="85" width="15" height="34" fill="#dadada"/><path d="M3.5 96.5h8M3.5 100.5h8M3.5 104.5h8" stroke="#505050" stroke-width="1.6"/><line x1="0" y1="657.5" x2="15" y2="657.5" stroke="#e0e0e0"/><path d="M3.5 665l4 4l4-4" stroke="#404040" stroke-width="1.3" fill="none"/></svg>
<div class="a" style="left:408px;top:161px;width:951px;height:673px;background:#fff"></div>
<div class="a" style="left:408px;top:161px;width:951px;height:1px;background:#777"></div>
<svg class="a" style="left:408px;top:161px" width="951" height="673" viewBox="408 161 951 673"><rect x="408" y="161" width="951" height="673" fill="#fff"/><line x1="408" y1="162" x2="1359" y2="162" stroke="#8a8a8a" stroke-width="2"/><g fill="none" stroke="#9a9a9a" stroke-width="1"><path d="M411.5 162 V834 M1356.5 162 V834"/><rect x="414.5" y="167.5" width="937" height="663"/></g><g stroke="#aaa" stroke-width="1"><line x1="411" y1="228.5" x2="414" y2="228.5"/><line x1="411" y1="295.5" x2="414" y2="295.5"/><line x1="411" y1="362.5" x2="414" y2="362.5"/><line x1="411" y1="429.5" x2="414" y2="429.5"/><line x1="411" y1="496.5" x2="414" y2="496.5"/><line x1="411" y1="563.5" x2="414" y2="563.5"/><line x1="411" y1="630.5" x2="414" y2="630.5"/><line x1="411" y1="697.5" x2="414" y2="697.5"/><line x1="411" y1="764.5" x2="414" y2="764.5"/><line x1="489.5" y1="830" x2="489.5" y2="834"/><line x1="567.5" y1="830" x2="567.5" y2="834"/><line x1="646.5" y1="830" x2="646.5" y2="834"/><line x1="724.5" y1="830" x2="724.5" y2="834"/><line x1="803.5" y1="830" x2="803.5" y2="834"/><line x1="881.5" y1="830" x2="881.5" y2="834"/><line x1="960.5" y1="830" x2="960.5" y2="834"/><line x1="1038.5" y1="830" x2="1038.5" y2="834"/><line x1="1117.5" y1="830" x2="1117.5" y2="834"/><line x1="1195.5" y1="830" x2="1195.5" y2="834"/><line x1="1274.5" y1="830" x2="1274.5" y2="834"/></g><g fill="none" stroke="#555" stroke-width=".8"><rect x="1280.5" y="167.5" width="71.5" height="20"/><line x1="1280.5" y1="173.3" x2="1352" y2="173.3"/><line x1="1280.5" y1="177.5" x2="1352" y2="177.5"/><line x1="1280.5" y1="181.5" x2="1352" y2="181.5"/><line x1="1280.5" y1="185.5" x2="1352" y2="185.5"/><line x1="1293.5" y1="173.3" x2="1293.5" y2="187.5"/><line x1="1321.5" y1="173.3" x2="1321.5" y2="187.5"/><line x1="1337.5" y1="173.3" x2="1337.5" y2="187.5"/></g><g stroke="#999" stroke-width=".7"><line x1="1300" y1="170.5" x2="1330" y2="170.5"/><line x1="1284" y1="175.5" x2="1290" y2="175.5"/><line x1="1300" y1="175.5" x2="1312" y2="175.5"/><line x1="1324" y1="175.5" x2="1335" y2="175.5"/><line x1="1340" y1="175.5" x2="1350" y2="175.5"/></g><g fill="none" stroke="#c4c4c4" stroke-width="1" stroke-dasharray="1.5,1.5"><rect x="449.5" y="232.5" width="537" height="479"/><rect x="986.5" y="232.5" width="321" height="477"/></g><line x1="986.5" y1="233" x2="986.5" y2="711" stroke="#d8d8d8" stroke-width="1.5"/><text x="452.3" y="251.6" font-size="18.6" font-family="Liberation Sans" fill="#000" stroke="#000" stroke-width=".25">POWER</text><text x="992.8" y="252.2" font-size="18.6" font-family="Liberation Sans" fill="#000" stroke="#000" stroke-width=".25">GND</text><g fill="none" stroke="#cdcdcd" stroke-width="1" shape-rendering="crispEdges"><line x1="675" y1="345.3" x2="688" y2="345.3"/><line x1="675" y1="349.3" x2="688" y2="349.3"/><line x1="675" y1="353.3" x2="688" y2="353.3"/><line x1="675" y1="357.3" x2="688" y2="357.3"/><line x1="675" y1="361.3" x2="688" y2="361.3"/><line x1="675" y1="365.3" x2="688" y2="365.3"/><line x1="675" y1="369.3" x2="688" y2="369.3"/><line x1="675" y1="373.3" x2="688" y2="373.3"/><line x1="675" y1="377.3" x2="688" y2="377.3"/><line x1="675" y1="381.3" x2="688" y2="381.3"/><line x1="675" y1="385.3" x2="688" y2="385.3"/><line x1="675" y1="389.3" x2="688" y2="389.3"/><line x1="675" y1="393.3" x2="688" y2="393.3"/><line x1="675" y1="397.3" x2="688" y2="397.3"/><line x1="675" y1="401.3" x2="688" y2="401.3"/><line x1="675" y1="405.3" x2="688" y2="405.3"/><line x1="675" y1="409.3" x2="688" y2="409.3"/><line x1="675" y1="413.3" x2="688" y2="413.3"/><line x1="675" y1="417.3" x2="688" y2="417.3"/><line x1="675" y1="421.3" x2="688" y2="421.3"/><line x1="675" y1="425.3" x2="688" y2="425.3"/><line x1="675" y1="429.3" x2="688" y2="429.3"/><line x1="675" y1="433.3" x2="688" y2="433.3"/><line x1="675" y1="437.3" x2="688" y2="437.3"/><line x1="675" y1="441.3" x2="688" y2="441.3"/><line x1="675" y1="445.3" x2="688" y2="445.3"/><line x1="675" y1="449.3" x2="688" y2="449.3"/><line x1="675" y1="453.3" x2="688" y2="453.3"/><line x1="675" y1="457.3" x2="688" y2="457.3"/><line x1="675" y1="461.3" x2="688" y2="461.3"/><line x1="675" y1="465.3" x2="688" y2="465.3"/><line x1="675" y1="469.3" x2="688" y2="469.3"/><line x1="675" y1="473.3" x2="688" y2="473.3"/><line x1="675" y1="477.3" x2="688" y2="477.3"/><line x1="675" y1="481.3" x2="688" y2="481.3"/><line x1="675" y1="485.3" x2="688" y2="485.3"/><line x1="675" y1="489.3" x2="688" y2="489.3"/><line x1="675" y1="493.3" x2="688" y2="493.3"/><line x1="675" y1="497.3" x2="688" y2="497.3"/><line x1="675" y1="501.3" x2="688" y2="501.3"/><line x1="675" y1="505.3" x2="688" y2="505.3"/><line x1="735" y1="345.3" x2="751" y2="345.3"/><line x1="735" y1="349.3" x2="751" y2="349.3"/><line x1="735" y1="353.3" x2="751" y2="353.3"/><line x1="735" y1="357.3" x2="751" y2="357.3"/><line x1="735" y1="363.3" x2="751" y2="363.3"/><line x1="735" y1="369.3" x2="751" y2="369.3"/><line x1="735" y1="373.3" x2="751" y2="373.3"/><line x1="735" y1="377.3" x2="751" y2="377.3"/><line x1="735" y1="381.3" x2="751" y2="381.3"/><line x1="735" y1="385.3" x2="751" y2="385.3"/><line x1="735" y1="391.3" x2="751" y2="391.3"/><line x1="735" y1="395.3" x2="751" y2="395.3"/><line x1="735" y1="399.3" x2="751" y2="399.3"/><line x1="735" y1="405.3" x2="751" y2="405.3"/><line x1="735" y1="413.3" x2="751" y2="413.3"/><line x1="735" y1="421.3" x2="751" y2="421.3"/><line x1="735" y1="430.3" x2="751" y2="430.3"/><line x1="735" y1="438.3" x2="751" y2="438.3"/><line x1="735" y1="446.3" x2="751" y2="446.3"/><line x1="735" y1="454.3" x2="751" y2="454.3"/><line x1="735" y1="462.3" x2="751" y2="462.3"/><line x1="735" y1="470.3" x2="751" y2="470.3"/><line x1="735" y1="476.3" x2="751" y2="476.3"/><line x1="735" y1="480.3" x2="751" y2="480.3"/><line x1="735" y1="484.3" x2="751" y2="484.3"/><line x1="735" y1="488.3" x2="751" y2="488.3"/><line x1="735" y1="500.3" x2="751" y2="500.3"/><line x1="735" y1="508.3" x2="751" y2="508.3"/><path d="M684 341.5h16M724 341.5h16" stroke="#888"/><line x1="685" y1="512.2" x2="703" y2="512.2"/><line x1="727" y1="512.2" x2="738" y2="512.2"/><line x1="675" y1="520.3" x2="688" y2="520.3"/><line x1="675" y1="524.3" x2="688" y2="524.3"/><line x1="675" y1="528.3" x2="688" y2="528.3"/><line x1="675" y1="532.3" x2="688" y2="532.3"/><line x1="675" y1="536.3" x2="688" y2="536.3"/><line x1="675" y1="540.3" x2="688" y2="540.3"/><line x1="675" y1="544.3" x2="688" y2="544.3"/><line x1="745" y1="520.3" x2="756" y2="520.3"/><line x1="745" y1="524.5" x2="756" y2="524.5"/><line x1="745" y1="528.7" x2="756" y2="528.7"/><line x1="745" y1="532.9" x2="756" y2="532.9"/><line x1="745" y1="537.1" x2="756" y2="537.1"/><line x1="745" y1="541.3" x2="756" y2="541.3"/><line x1="745" y1="545.5" x2="756" y2="545.5"/><line x1="745" y1="549.7" x2="756" y2="549.7"/><line x1="745" y1="553.9" x2="756" y2="553.9"/><line x1="794" y1="345.0" x2="803" y2="345.0"/><line x1="794" y1="363.0" x2="803" y2="363.0"/><line x1="794" y1="369.0" x2="803" y2="369.0"/><line x1="794" y1="385.0" x2="803" y2="385.0"/><line x1="794" y1="391.0" x2="803" y2="391.0"/><line x1="794" y1="405.0" x2="803" y2="405.0"/><line x1="794" y1="413.0" x2="803" y2="413.0"/><line x1="794" y1="421.0" x2="803" y2="421.0"/><line x1="794" y1="429.6" x2="803" y2="429.6"/><line x1="794" y1="437.5" x2="803" y2="437.5"/><line x1="794" y1="445.7" x2="803" y2="445.7"/><line x1="794" y1="461.9" x2="803" y2="461.9"/><line x1="836.5" y1="368" x2="836.5" y2="372"/><line x1="836.5" y1="379" x2="836.5" y2="383"/><line x1="840.9" y1="368" x2="840.9" y2="372"/><line x1="840.9" y1="379" x2="840.9" y2="383"/><line x1="830.0" y1="357.5" x2="838.0" y2="357.5"/><line x1="848.5" y1="368" x2="848.5" y2="372"/><line x1="848.5" y1="379" x2="848.5" y2="383"/><line x1="854.5" y1="368" x2="854.5" y2="372"/><line x1="854.5" y1="379" x2="854.5" y2="383"/><line x1="859.5" y1="368" x2="859.5" y2="372"/><line x1="859.5" y1="379" x2="859.5" y2="383"/><line x1="842.0" y1="357.5" x2="850.0" y2="357.5"/><line x1="866.5" y1="368" x2="866.5" y2="372"/><line x1="866.5" y1="379" x2="866.5" y2="383"/><line x1="872.5" y1="368" x2="872.5" y2="372"/><line x1="872.5" y1="379" x2="872.5" y2="383"/><line x1="879.5" y1="368" x2="879.5" y2="372"/><line x1="879.5" y1="379" x2="879.5" y2="383"/><line x1="860.0" y1="357.5" x2="868.0" y2="357.5"/><line x1="885.5" y1="368" x2="885.5" y2="372"/><line x1="885.5" y1="379" x2="885.5" y2="383"/><line x1="890.5" y1="368" x2="890.5" y2="372"/><line x1="890.5" y1="379" x2="890.5" y2="383"/><line x1="896.0" y1="368" x2="896.0" y2="372"/><line x1="896.0" y1="379" x2="896.0" y2="383"/><line x1="879.0" y1="357.5" x2="887.0" y2="357.5"/><line x1="902.8" y1="368" x2="902.8" y2="372"/><line x1="902.8" y1="379" x2="902.8" y2="383"/><line x1="896.3" y1="357.5" x2="904.3" y2="357.5"/><line x1="914.9" y1="368" x2="914.9" y2="372"/><line x1="914.9" y1="379" x2="914.9" y2="383"/><line x1="921.2" y1="368" x2="921.2" y2="372"/><line x1="921.2" y1="379" x2="921.2" y2="383"/><line x1="908.4" y1="357.5" x2="916.4" y2="357.5"/><line x1="927.1" y1="368" x2="927.1" y2="372"/><line x1="927.1" y1="379" x2="927.1" y2="383"/><line x1="920.6" y1="357.5" x2="928.6" y2="357.5"/><line x1="939.0" y1="368" x2="939.0" y2="372"/><line x1="939.0" y1="379" x2="939.0" y2="383"/><line x1="932.5" y1="357.5" x2="940.5" y2="357.5"/><line x1="949.0" y1="368" x2="949.0" y2="372"/><line x1="949.0" y1="379" x2="949.0" y2="383"/><line x1="942.5" y1="357.5" x2="950.5" y2="357.5"/><line x1="961.1" y1="368" x2="961.1" y2="372"/><line x1="961.1" y1="379" x2="961.1" y2="383"/><line x1="967.3" y1="368" x2="967.3" y2="372"/><line x1="967.3" y1="379" x2="967.3" y2="383"/><line x1="973.3" y1="368" x2="973.3" y2="372"/><line x1="973.3" y1="379" x2="973.3" y2="383"/><line x1="979.3" y1="368" x2="979.3" y2="372"/><line x1="979.3" y1="379" x2="979.3" y2="383"/><line x1="954.6" y1="357.5" x2="962.6" y2="357.5"/><line x1="796" y1="380.5" x2="826" y2="380.5"/></g><g fill="none" stroke="#999" stroke-width="1" shape-rendering="crispEdges"><rect x="672.5" y="335.5" width="81" height="223"/><line x1="672.5" y1="339.3" x2="753.5" y2="339.3"/><line x1="672.5" y1="343.4" x2="753.5" y2="343.4"/><line x1="713.6" y1="339.3" x2="713.6" y2="554.5"/><line x1="672.5" y1="510.2" x2="753.5" y2="510.2"/><line x1="672.5" y1="514.2" x2="753.5" y2="514.2"/><line x1="672.5" y1="554.4" x2="753.5" y2="554.4"/><rect x="672.5" y="542" width="41" height="4"/><line x1="664.6" y1="345.0" x2="672.5" y2="345.0"/><line x1="664.6" y1="349.0" x2="672.5" y2="349.0"/><line x1="664.6" y1="353.0" x2="672.5" y2="353.0"/><line x1="664.6" y1="357.0" x2="672.5" y2="357.0"/><line x1="664.6" y1="361.0" x2="672.5" y2="361.0"/><line x1="664.6" y1="365.0" x2="672.5" y2="365.0"/><line x1="664.6" y1="369.0" x2="672.5" y2="369.0"/><line x1="664.6" y1="373.0" x2="672.5" y2="373.0"/><line x1="664.6" y1="377.0" x2="672.5" y2="377.0"/><line x1="664.6" y1="381.0" x2="672.5" y2="381.0"/><line x1="664.6" y1="385.0" x2="672.5" y2="385.0"/><line x1="664.6" y1="389.0" x2="672.5" y2="389.0"/><line x1="664.6" y1="393.0" x2="672.5" y2="393.0"/><line x1="664.6" y1="397.0" x2="672.5" y2="397.0"/><line x1="664.6" y1="401.0" x2="672.5" y2="401.0"/><line x1="664.6" y1="405.0" x2="672.5" y2="405.0"/><line x1="664.6" y1="409.0" x2="672.5" y2="409.0"/><line x1="664.6" y1="413.0" x2="672.5" y2="413.0"/><line x1="664.6" y1="417.0" x2="672.5" y2="417.0"/><line x1="664.6" y1="421.0" x2="672.5" y2="421.0"/><line x1="664.6" y1="425.0" x2="672.5" y2="425.0"/><line x1="664.6" y1="429.0" x2="672.5" y2="429.0"/><line x1="664.6" y1="433.0" x2="672.5" y2="433.0"/><line x1="664.6" y1="437.0" x2="672.5" y2="437.0"/><line x1="664.6" y1="441.0" x2="672.5" y2="441.0"/><line x1="664.6" y1="445.0" x2="672.5" y2="445.0"/><line x1="664.6" y1="449.0" x2="672.5" y2="449.0"/><line x1="664.6" y1="453.0" x2="672.5" y2="453.0"/><line x1="664.6" y1="457.0" x2="672.5" y2="457.0"/><line x1="664.6" y1="461.0" x2="672.5" y2="461.0"/><line x1="664.6" y1="465.0" x2="672.5" y2="465.0"/><line x1="664.6" y1="469.0" x2="672.5" y2="469.0"/><line x1="664.6" y1="473.0" x2="672.5" y2="473.0"/><line x1="664.6" y1="477.0" x2="672.5" y2="477.0"/><line x1="664.6" y1="481.0" x2="672.5" y2="481.0"/><line x1="664.6" y1="485.0" x2="672.5" y2="485.0"/><line x1="664.6" y1="489.0" x2="672.5" y2="489.0"/><line x1="664.6" y1="493.0" x2="672.5" y2="493.0"/><line x1="664.6" y1="497.0" x2="672.5" y2="497.0"/><line x1="664.6" y1="501.0" x2="672.5" y2="501.0"/><line x1="664.6" y1="505.0" x2="672.5" y2="505.0"/><line x1="664.6" y1="336" x2="664.6" y2="494"/><line x1="664.6" y1="498" x2="672.5" y2="498"/><line x1="622" y1="345" x2="664.6" y2="345"/><line x1="622.0" y1="345" x2="622.0" y2="368"/><line x1="631.5" y1="345" x2="631.5" y2="368"/><line x1="640.5" y1="345" x2="640.5" y2="368"/><line x1="648.5" y1="345" x2="648.5" y2="368"/><line x1="656.5" y1="345" x2="656.5" y2="368"/><line x1="753.5" y1="345.0" x2="790.0" y2="345.0"/><line x1="753.5" y1="349.0" x2="770.0" y2="349.0"/><line x1="753.5" y1="353.0" x2="770.0" y2="353.0"/><line x1="753.5" y1="357.0" x2="770.0" y2="357.0"/><line x1="753.5" y1="363.0" x2="790.0" y2="363.0"/><line x1="753.5" y1="369.0" x2="790.0" y2="369.0"/><line x1="753.5" y1="373.0" x2="770.0" y2="373.0"/><line x1="753.5" y1="377.0" x2="770.0" y2="377.0"/><line x1="753.5" y1="381.0" x2="770.0" y2="381.0"/><line x1="753.5" y1="385.0" x2="790.0" y2="385.0"/><line x1="753.5" y1="391.0" x2="790.0" y2="391.0"/><line x1="753.5" y1="405.0" x2="790.0" y2="405.0"/><line x1="753.5" y1="413.0" x2="790.0" y2="413.0"/><line x1="753.5" y1="421.0" x2="790.0" y2="421.0"/><line x1="753.5" y1="429.6" x2="790.0" y2="429.6"/><line x1="753.5" y1="437.5" x2="790.0" y2="437.5"/><line x1="753.5" y1="445.7" x2="790.0" y2="445.7"/><line x1="753.5" y1="461.9" x2="790.0" y2="461.9"/><line x1="761.5" y1="391" x2="761.5" y2="399"/><line x1="753.5" y1="395" x2="761.5" y2="395"/><line x1="753.5" y1="399" x2="761.5" y2="399"/><line x1="761.5" y1="446" x2="761.5" y2="508"/><line x1="753.5" y1="454.0" x2="761.5" y2="454.0"/><line x1="753.5" y1="472.0" x2="761.5" y2="472.0"/><line x1="753.5" y1="476.0" x2="761.5" y2="476.0"/><line x1="753.5" y1="480.0" x2="761.5" y2="480.0"/><line x1="753.5" y1="484.0" x2="761.5" y2="484.0"/><line x1="753.5" y1="488.0" x2="761.5" y2="488.0"/><line x1="753.5" y1="500.0" x2="761.5" y2="500.0"/><line x1="753.5" y1="508.0" x2="761.5" y2="508.0"/><circle cx="771" cy="372" r="7.5" stroke="#000" stroke-width="1.2"/><path d="M763 369 l2 2 l2 -2 l2 2 l2 -2 l2 2 l2 -2" stroke="#888"/><path d="M761 353 l2 2 l2 -2 l2 2 l2 -2 l2 2" stroke="#888"/><path d="M761 357 l2 2 l2 -2 l2 2 l2 -2 l2 2" stroke="#888"/><line x1="638.5" y1="437" x2="664.6" y2="437"/><line x1="638.5" y1="437" x2="638.5" y2="452"/><line x1="598" y1="504.0" x2="672.5" y2="504.0"/><line x1="598" y1="508.0" x2="672.5" y2="508.0"/><line x1="588" y1="524.6" x2="664.6" y2="524.6"/><line x1="588" y1="524.6" x2="588" y2="545"/><line x1="621.0" y1="524.6" x2="621.0" y2="545"/><line x1="628.0" y1="524.6" x2="628.0" y2="545"/><line x1="637.0" y1="524.6" x2="637.0" y2="545"/><line x1="664.6" y1="518" x2="672.5" y2="518"/><line x1="834.0" y1="360" x2="834.0" y2="388"/><line x1="834.0" y1="365.3" x2="838.4" y2="365.3"/><line x1="834.0" y1="383.4" x2="838.4" y2="383.4"/><line x1="838.4" y1="365.3" x2="838.4" y2="383.4"/><line x1="846.0" y1="360" x2="846.0" y2="388"/><line x1="846.0" y1="365.3" x2="857.0" y2="365.3"/><line x1="846.0" y1="383.4" x2="857.0" y2="383.4"/><line x1="857.0" y1="365.3" x2="857.0" y2="383.4"/><line x1="852.0" y1="365.3" x2="852.0" y2="383.4"/><line x1="864.0" y1="360" x2="864.0" y2="388"/><line x1="864.0" y1="365.3" x2="877.0" y2="365.3"/><line x1="864.0" y1="383.4" x2="877.0" y2="383.4"/><line x1="877.0" y1="365.3" x2="877.0" y2="383.4"/><line x1="870.0" y1="365.3" x2="870.0" y2="383.4"/><line x1="883.0" y1="360" x2="883.0" y2="388"/><line x1="883.0" y1="365.3" x2="893.5" y2="365.3"/><line x1="883.0" y1="383.4" x2="893.5" y2="383.4"/><line x1="893.5" y1="365.3" x2="893.5" y2="383.4"/><line x1="888.0" y1="365.3" x2="888.0" y2="383.4"/><line x1="900.3" y1="360" x2="900.3" y2="388"/><line x1="912.4" y1="360" x2="912.4" y2="388"/><line x1="912.4" y1="365.3" x2="918.7" y2="365.3"/><line x1="912.4" y1="383.4" x2="918.7" y2="383.4"/><line x1="918.7" y1="365.3" x2="918.7" y2="383.4"/><line x1="924.6" y1="360" x2="924.6" y2="388"/><line x1="936.5" y1="360" x2="936.5" y2="388"/><line x1="946.5" y1="360" x2="946.5" y2="388"/><line x1="958.6" y1="360" x2="958.6" y2="388"/><line x1="958.6" y1="365.3" x2="976.8" y2="365.3"/><line x1="958.6" y1="383.4" x2="976.8" y2="383.4"/><line x1="976.8" y1="365.3" x2="976.8" y2="383.4"/><line x1="964.8" y1="365.3" x2="964.8" y2="383.4"/><line x1="970.8" y1="365.3" x2="970.8" y2="383.4"/></g><g fill="#000" stroke="none"><circle cx="664.6" cy="345.0" r="1.9"/><circle cx="664.6" cy="349.0" r="1.9"/><circle cx="664.6" cy="353.0" r="1.9"/><circle cx="664.6" cy="357.0" r="1.9"/><circle cx="664.6" cy="361.0" r="1.9"/><circle cx="664.6" cy="365.0" r="1.9"/><circle cx="664.6" cy="369.0" r="1.9"/><circle cx="664.6" cy="373.0" r="1.9"/><circle cx="664.6" cy="377.0" r="1.9"/><circle cx="664.6" cy="381.0" r="1.9"/><circle cx="664.6" cy="385.0" r="1.9"/><circle cx="664.6" cy="389.0" r="1.9"/><circle cx="664.6" cy="393.0" r="1.9"/><circle cx="664.6" cy="397.0" r="1.9"/><circle cx="664.6" cy="401.0" r="1.9"/><circle cx="664.6" cy="405.0" r="1.9"/><circle cx="664.6" cy="409.0" r="1.9"/><circle cx="664.6" cy="413.0" r="1.9"/><circle cx="664.6" cy="417.0" r="1.9"/><circle cx="664.6" cy="421.0" r="1.9"/><circle cx="664.6" cy="425.0" r="1.9"/><circle cx="664.6" cy="429.0" r="1.9"/><circle cx="664.6" cy="433.0" r="1.9"/><circle cx="664.6" cy="437.0" r="1.9"/><circle cx="664.6" cy="441.0" r="1.9"/><circle cx="664.6" cy="445.0" r="1.9"/><circle cx="664.6" cy="449.0" r="1.9"/><circle cx="664.6" cy="453.0" r="1.9"/><circle cx="664.6" cy="457.0" r="1.9"/><circle cx="664.6" cy="461.0" r="1.9"/><circle cx="664.6" cy="465.0" r="1.9"/><circle cx="664.6" cy="469.0" r="1.9"/><circle cx="664.6" cy="473.0" r="1.9"/><circle cx="664.6" cy="477.0" r="1.9"/><circle cx="664.6" cy="481.0" r="1.9"/><circle cx="664.6" cy="485.0" r="1.9"/><circle cx="664.6" cy="489.0" r="1.9"/><circle cx="664.6" cy="493.0" r="1.9"/><path d="M664.6 333 l-2.5 4 h5z"/><path d="M618.5 355.0 h7 M618.5 357.2 h7" stroke="#000" stroke-width="1" shape-rendering="crispEdges"/><path d="M622.0 366.0 l-3 0 l3 4.5 l3 -4.5z"/><path d="M628.0 355.0 h7 M628.0 357.2 h7" stroke="#000" stroke-width="1" shape-rendering="crispEdges"/><path d="M631.5 366.0 l-3 0 l3 4.5 l3 -4.5z"/><path d="M637.0 355.0 h7 M637.0 357.2 h7" stroke="#000" stroke-width="1" shape-rendering="crispEdges"/><path d="M640.5 366.0 l-3 0 l3 4.5 l3 -4.5z"/><path d="M645.0 355.0 h7 M645.0 357.2 h7" stroke="#000" stroke-width="1" shape-rendering="crispEdges"/><path d="M648.5 366.0 l-3 0 l3 4.5 l3 -4.5z"/><path d="M653.0 355.0 h7 M653.0 357.2 h7" stroke="#000" stroke-width="1" shape-rendering="crispEdges"/><path d="M656.5 366.0 l-3 0 l3 4.5 l3 -4.5z"/><circle cx="631.5" cy="345.0" r="1.5"/><circle cx="640.5" cy="345.0" r="1.5"/><circle cx="648.5" cy="345.0" r="1.5"/><circle cx="656.5" cy="345.0" r="1.5"/><circle cx="789.0" cy="345.0" r="1.7"/><path d="M786.0 345.0 l4 0 l-2 -2 z"/><circle cx="789.0" cy="363.0" r="1.7"/><path d="M786.0 363.0 l4 0 l-2 -2 z"/><circle cx="789.0" cy="369.0" r="1.7"/><path d="M786.0 369.0 l4 0 l-2 -2 z"/><circle cx="789.0" cy="385.0" r="1.7"/><path d="M786.0 385.0 l4 0 l-2 -2 z"/><circle cx="789.0" cy="391.0" r="1.7"/><path d="M786.0 391.0 l4 0 l-2 -2 z"/><circle cx="789.0" cy="405.0" r="1.7"/><path d="M786.0 405.0 l4 0 l-2 -2 z"/><circle cx="789.0" cy="413.0" r="1.7"/><path d="M786.0 413.0 l4 0 l-2 -2 z"/><circle cx="789.0" cy="421.0" r="1.7"/><path d="M786.0 421.0 l4 0 l-2 -2 z"/><circle cx="789.0" cy="429.6" r="1.7"/><path d="M786.0 429.6 l4 0 l-2 -2 z"/><circle cx="789.0" cy="437.5" r="1.7"/><path d="M786.0 437.5 l4 0 l-2 -2 z"/><circle cx="789.0" cy="445.7" r="1.7"/><path d="M786.0 445.7 l4 0 l-2 -2 z"/><circle cx="789.0" cy="461.9" r="1.7"/><path d="M786.0 461.9 l4 0 l-2 -2 z"/><circle cx="778.5" cy="345.0" r="1.7"/><circle cx="778.5" cy="349.0" r="1.7"/><circle cx="778.5" cy="353.0" r="1.7"/><circle cx="780.0" cy="369.0" r="1.7"/><circle cx="780.0" cy="373.0" r="1.7"/><circle cx="780.0" cy="377.0" r="1.7"/><circle cx="761.5" cy="391.0" r="1.6"/><circle cx="761.5" cy="395.0" r="1.6"/><circle cx="761.5" cy="446.0" r="1.6"/><circle cx="761.5" cy="454.0" r="1.6"/><circle cx="761.5" cy="472.0" r="1.6"/><circle cx="761.5" cy="476.0" r="1.6"/><circle cx="761.5" cy="480.0" r="1.6"/><circle cx="761.5" cy="484.0" r="1.6"/><circle cx="761.5" cy="488.0" r="1.6"/><circle cx="761.5" cy="500.0" r="1.6"/><rect x="636" y="434.5" width="5" height="5" fill="#888"/><path d="M638.5 450.0 l-3 0 l3 4.5 l3 -4.5z"/><rect x="617.5" y="502.8" width="5.5" height="2.4" rx="1.2" fill="#fff" stroke="#000" stroke-width="1"/><rect x="617.5" y="506.8" width="5.5" height="2.4" rx="1.2" fill="#fff" stroke="#000" stroke-width="1"/><path d="M584.5 532.0 h7 M584.5 534.2 h7" stroke="#000" stroke-width="1" shape-rendering="crispEdges"/><path d="M588.0 542.0 l-3 0 l3 4.5 l3 -4.5z"/><path d="M617.5 532.0 h7 M617.5 534.2 h7" stroke="#000" stroke-width="1" shape-rendering="crispEdges"/><path d="M621.0 542.0 l-3 0 l3 4.5 l3 -4.5z"/><path d="M624.5 532.0 h7 M624.5 534.2 h7" stroke="#000" stroke-width="1" shape-rendering="crispEdges"/><path d="M628.0 542.0 l-3 0 l3 4.5 l3 -4.5z"/><path d="M633.5 532.0 h7 M633.5 534.2 h7" stroke="#000" stroke-width="1" shape-rendering="crispEdges"/><path d="M637.0 542.0 l-3 0 l3 4.5 l3 -4.5z"/><circle cx="621.0" cy="524.6" r="1.5"/><circle cx="628.0" cy="524.6" r="1.5"/><circle cx="637.0" cy="524.6" r="1.5"/><circle cx="621.0" cy="519.5" r="1.7"/><circle cx="664.6" cy="520.0" r="1.7"/><circle cx="664.6" cy="524.2" r="1.7"/><circle cx="664.6" cy="528.4" r="1.7"/><circle cx="664.6" cy="532.6" r="1.7"/><circle cx="664.6" cy="536.8" r="1.7"/><path d="M834.0 357.5 l-2.6 3.6 h5.2z"/><circle cx="834.0" cy="360.8" r="1.9"/><path d="M837.0 386.3 h-6 l3 4.6z"/><rect x="831.0" y="373.6" width="6" height="1.5"/><rect x="831.0" y="376" width="6" height="1.5"/><rect x="835.4" y="373.6" width="6" height="1.5"/><rect x="835.4" y="376" width="6" height="1.5"/><circle cx="834.0" cy="365.3" r="1.8"/><circle cx="834.0" cy="383.4" r="1.8"/><path d="M846.0 357.5 l-2.6 3.6 h5.2z"/><circle cx="846.0" cy="360.8" r="1.9"/><path d="M849.0 386.3 h-6 l3 4.6z"/><rect x="843.0" y="373.6" width="6" height="1.5"/><rect x="843.0" y="376" width="6" height="1.5"/><rect x="849.0" y="373.6" width="6" height="1.5"/><rect x="849.0" y="376" width="6" height="1.5"/><rect x="854.0" y="373.6" width="6" height="1.5"/><rect x="854.0" y="376" width="6" height="1.5"/><circle cx="846.0" cy="365.3" r="1.8"/><circle cx="846.0" cy="383.4" r="1.8"/><circle cx="852.0" cy="365.3" r="1.8"/><circle cx="852.0" cy="383.4" r="1.8"/><path d="M864.0 357.5 l-2.6 3.6 h5.2z"/><circle cx="864.0" cy="360.8" r="1.9"/><path d="M867.0 386.3 h-6 l3 4.6z"/><rect x="861.0" y="373.6" width="6" height="1.5"/><rect x="861.0" y="376" width="6" height="1.5"/><rect x="867.0" y="373.6" width="6" height="1.5"/><rect x="867.0" y="376" width="6" height="1.5"/><rect x="874.0" y="373.6" width="6" height="1.5"/><rect x="874.0" y="376" width="6" height="1.5"/><circle cx="864.0" cy="365.3" r="1.8"/><circle cx="864.0" cy="383.4" r="1.8"/><circle cx="870.0" cy="365.3" r="1.8"/><circle cx="870.0" cy="383.4" r="1.8"/><path d="M883.0 357.5 l-2.6 3.6 h5.2z"/><circle cx="883.0" cy="360.8" r="1.9"/><path d="M886.0 386.3 h-6 l3 4.6z"/><rect x="880.0" y="373.6" width="6" height="1.5"/><rect x="880.0" y="376" width="6" height="1.5"/><rect x="885.0" y="373.6" width="6" height="1.5"/><rect x="885.0" y="376" width="6" height="1.5"/><rect x="890.5" y="373.6" width="6" height="1.5"/><rect x="890.5" y="376" width="6" height="1.5"/><circle cx="883.0" cy="365.3" r="1.8"/><circle cx="883.0" cy="383.4" r="1.8"/><circle cx="888.0" cy="365.3" r="1.8"/><circle cx="888.0" cy="383.4" r="1.8"/><path d="M900.3 357.5 l-2.6 3.6 h5.2z"/><circle cx="900.3" cy="360.8" r="1.9"/><path d="M903.3 386.3 h-6 l3 4.6z"/><rect x="897.3" y="373.6" width="6" height="1.5"/><rect x="897.3" y="376" width="6" height="1.5"/><path d="M912.4 357.5 l-2.6 3.6 h5.2z"/><circle cx="912.4" cy="360.8" r="1.9"/><path d="M915.4 386.3 h-6 l3 4.6z"/><rect x="909.4" y="373.6" width="6" height="1.5"/><rect x="909.4" y="376" width="6" height="1.5"/><rect x="915.7" y="373.6" width="6" height="1.5"/><rect x="915.7" y="376" width="6" height="1.5"/><circle cx="912.4" cy="365.3" r="1.8"/><circle cx="912.4" cy="383.4" r="1.8"/><path d="M924.6 357.5 l-2.6 3.6 h5.2z"/><circle cx="924.6" cy="360.8" r="1.9"/><path d="M927.6 386.3 h-6 l3 4.6z"/><rect x="921.6" y="373.6" width="6" height="1.5"/><rect x="921.6" y="376" width="6" height="1.5"/><path d="M936.5 357.5 l-2.6 3.6 h5.2z"/><circle cx="936.5" cy="360.8" r="1.9"/><path d="M939.5 386.3 h-6 l3 4.6z"/><rect x="933.5" y="373.6" width="6" height="1.5"/><rect x="933.5" y="376" width="6" height="1.5"/><path d="M946.5 357.5 l-2.6 3.6 h5.2z"/><circle cx="946.5" cy="360.8" r="1.9"/><path d="M949.5 386.3 h-6 l3 4.6z"/><rect x="943.5" y="373.6" width="6" height="1.5"/><rect x="943.5" y="376" width="6" height="1.5"/><path d="M958.6 357.5 l-2.6 3.6 h5.2z"/><circle cx="958.6" cy="360.8" r="1.9"/><path d="M961.6 386.3 h-6 l3 4.6z"/><rect x="955.6" y="373.6" width="6" height="1.5"/><rect x="955.6" y="376" width="6" height="1.5"/><rect x="961.8" y="373.6" width="6" height="1.5"/><rect x="961.8" y="376" width="6" height="1.5"/><rect x="967.8" y="373.6" width="6" height="1.5"/><rect x="967.8" y="376" width="6" height="1.5"/><rect x="973.8" y="373.6" width="6" height="1.5"/><rect x="973.8" y="376" width="6" height="1.5"/><circle cx="958.6" cy="365.3" r="1.8"/><circle cx="958.6" cy="383.4" r="1.8"/><circle cx="964.8" cy="365.3" r="1.8"/><circle cx="964.8" cy="383.4" r="1.8"/><circle cx="970.8" cy="365.3" r="1.8"/><circle cx="970.8" cy="383.4" r="1.8"/></g><g fill="none" stroke="#a0a0a0" stroke-width="1" shape-rendering="crispEdges"><rect x="1017.3" y="307.0" width="80.3" height="173.7"/><line x1="1017.3" y1="310.8" x2="1097.6" y2="310.8"/><line x1="1017.3" y1="315.6" x2="1097.6" y2="315.6"/><line x1="1057.4" y1="310.8" x2="1057.4" y2="476.7"/><line x1="1017.3" y1="476.7" x2="1097.6" y2="476.7"/></g><g fill="none" stroke="#909090" stroke-width=".8"><line x1="1008.9" y1="321.5" x2="1008.9" y2="480.7"/><line x1="1105.7" y1="321.5" x2="1105.7" y2="480.7"/></g><g fill="none" stroke="#bdbdbd" stroke-width="1" shape-rendering="crispEdges"><line x1="1008.9" y1="321.5" x2="1017.3" y2="321.5"/><line x1="1097.6" y1="321.5" x2="1105.7" y2="321.5"/><line x1="1008.9" y1="325.5" x2="1017.3" y2="325.5"/><line x1="1097.6" y1="325.5" x2="1105.7" y2="325.5"/><line x1="1008.9" y1="329.5" x2="1017.3" y2="329.5"/><line x1="1097.6" y1="329.5" x2="1105.7" y2="329.5"/><line x1="1008.9" y1="333.5" x2="1017.3" y2="333.5"/><line x1="1097.6" y1="333.5" x2="1105.7" y2="333.5"/><line x1="1008.9" y1="337.5" x2="1017.3" y2="337.5"/><line x1="1097.6" y1="337.5" x2="1105.7" y2="337.5"/><line x1="1008.9" y1="341.5" x2="1017.3" y2="341.5"/><line x1="1097.6" y1="341.5" x2="1105.7" y2="341.5"/><line x1="1008.9" y1="345.5" x2="1017.3" y2="345.5"/><line x1="1097.6" y1="345.5" x2="1105.7" y2="345.5"/><line x1="1008.9" y1="349.5" x2="1017.3" y2="349.5"/><line x1="1097.6" y1="349.5" x2="1105.7" y2="349.5"/><line x1="1008.9" y1="353.5" x2="1017.3" y2="353.5"/><line x1="1097.6" y1="353.5" x2="1105.7" y2="353.5"/><line x1="1008.9" y1="357.5" x2="1017.3" y2="357.5"/><line x1="1097.6" y1="357.5" x2="1105.7" y2="357.5"/><line x1="1008.9" y1="361.5" x2="1017.3" y2="361.5"/><line x1="1097.6" y1="361.5" x2="1105.7" y2="361.5"/><line x1="1008.9" y1="365.5" x2="1017.3" y2="365.5"/><line x1="1097.6" y1="365.5" x2="1105.7" y2="365.5"/><line x1="1008.9" y1="369.5" x2="1017.3" y2="369.5"/><line x1="1097.6" y1="369.5" x2="1105.7" y2="369.5"/><line x1="1008.9" y1="373.5" x2="1017.3" y2="373.5"/><line x1="1097.6" y1="373.5" x2="1105.7" y2="373.5"/><line x1="1008.9" y1="377.5" x2="1017.3" y2="377.5"/><line x1="1097.6" y1="377.5" x2="1105.7" y2="377.5"/><line x1="1008.9" y1="381.5" x2="1017.3" y2="381.5"/><line x1="1097.6" y1="381.5" x2="1105.7" y2="381.5"/><line x1="1008.9" y1="385.5" x2="1017.3" y2="385.5"/><line x1="1097.6" y1="385.5" x2="1105.7" y2="385.5"/><line x1="1008.9" y1="389.5" x2="1017.3" y2="389.5"/><line x1="1097.6" y1="389.5" x2="1105.7" y2="389.5"/><line x1="1008.9" y1="394.5" x2="1017.3" y2="394.5"/><line x1="1097.6" y1="394.5" x2="1105.7" y2="394.5"/><line x1="1008.9" y1="398.5" x2="1017.3" y2="398.5"/><line x1="1097.6" y1="398.5" x2="1105.7" y2="398.5"/><line x1="1008.9" y1="402.5" x2="1017.3" y2="402.5"/><line x1="1097.6" y1="402.5" x2="1105.7" y2="402.5"/><line x1="1008.9" y1="406.5" x2="1017.3" y2="406.5"/><line x1="1097.6" y1="406.5" x2="1105.7" y2="406.5"/><line x1="1008.9" y1="410.5" x2="1017.3" y2="410.5"/><line x1="1097.6" y1="410.5" x2="1105.7" y2="410.5"/><line x1="1008.9" y1="414.5" x2="1017.3" y2="414.5"/><line x1="1097.6" y1="414.5" x2="1105.7" y2="414.5"/><line x1="1008.9" y1="418.5" x2="1017.3" y2="418.5"/><line x1="1097.6" y1="418.5" x2="1105.7" y2="418.5"/><line x1="1008.9" y1="422.5" x2="1017.3" y2="422.5"/><line x1="1097.6" y1="422.5" x2="1105.7" y2="422.5"/><line x1="1008.9" y1="426.5" x2="1017.3" y2="426.5"/><line x1="1097.6" y1="426.5" x2="1105.7" y2="426.5"/><line x1="1008.9" y1="430.5" x2="1017.3" y2="430.5"/><line x1="1097.6" y1="430.5" x2="1105.7" y2="430.5"/><line x1="1008.9" y1="434.5" x2="1017.3" y2="434.5"/><line x1="1097.6" y1="434.5" x2="1105.7" y2="434.5"/><line x1="1008.9" y1="438.5" x2="1017.3" y2="438.5"/><line x1="1097.6" y1="438.5" x2="1105.7" y2="438.5"/><line x1="1008.9" y1="442.5" x2="1017.3" y2="442.5"/><line x1="1097.6" y1="442.5" x2="1105.7" y2="442.5"/><line x1="1008.9" y1="446.5" x2="1017.3" y2="446.5"/><line x1="1097.6" y1="446.5" x2="1105.7" y2="446.5"/><line x1="1008.9" y1="450.5" x2="1017.3" y2="450.5"/><line x1="1097.6" y1="450.5" x2="1105.7" y2="450.5"/><line x1="1008.9" y1="454.5" x2="1017.3" y2="454.5"/><line x1="1097.6" y1="454.5" x2="1105.7" y2="454.5"/><line x1="1008.9" y1="458.5" x2="1017.3" y2="458.5"/><line x1="1097.6" y1="458.5" x2="1105.7" y2="458.5"/><line x1="1008.9" y1="462.5" x2="1017.3" y2="462.5"/><line x1="1097.6" y1="462.5" x2="1105.7" y2="462.5"/><line x1="1008.9" y1="466.5" x2="1017.3" y2="466.5"/><line x1="1097.6" y1="466.5" x2="1105.7" y2="466.5"/><line x1="1008.9" y1="470.5" x2="1017.3" y2="470.5"/><line x1="1097.6" y1="470.5" x2="1105.7" y2="470.5"/><line x1="1008.9" y1="474.5" x2="1017.3" y2="474.5"/><line x1="1097.6" y1="474.5" x2="1105.7" y2="474.5"/></g><g fill="none" stroke="#c4c4c4" stroke-width="1" shape-rendering="crispEdges"><line x1="1018.8" y1="321.5" x2="1022.3" y2="321.5"/><line x1="1092.6" y1="321.5" x2="1096.1" y2="321.5"/><line x1="1018.8" y1="325.5" x2="1022.3" y2="325.5"/><line x1="1092.6" y1="325.5" x2="1096.1" y2="325.5"/><line x1="1018.8" y1="329.5" x2="1022.3" y2="329.5"/><line x1="1092.6" y1="329.5" x2="1096.1" y2="329.5"/><line x1="1018.8" y1="333.5" x2="1022.3" y2="333.5"/><line x1="1092.6" y1="333.5" x2="1096.1" y2="333.5"/><line x1="1018.8" y1="337.5" x2="1022.3" y2="337.5"/><line x1="1092.6" y1="337.5" x2="1096.1" y2="337.5"/><line x1="1018.8" y1="341.5" x2="1022.3" y2="341.5"/><line x1="1092.6" y1="341.5" x2="1096.1" y2="341.5"/><line x1="1018.8" y1="345.5" x2="1022.3" y2="345.5"/><line x1="1092.6" y1="345.5" x2="1096.1" y2="345.5"/><line x1="1018.8" y1="349.5" x2="1022.3" y2="349.5"/><line x1="1092.6" y1="349.5" x2="1096.1" y2="349.5"/><line x1="1018.8" y1="353.5" x2="1022.3" y2="353.5"/><line x1="1092.6" y1="353.5" x2="1096.1" y2="353.5"/><line x1="1018.8" y1="357.5" x2="1022.3" y2="357.5"/><line x1="1092.6" y1="357.5" x2="1096.1" y2="357.5"/><line x1="1018.8" y1="361.5" x2="1022.3" y2="361.5"/><line x1="1092.6" y1="361.5" x2="1096.1" y2="361.5"/><line x1="1018.8" y1="365.5" x2="1022.3" y2="365.5"/><line x1="1092.6" y1="365.5" x2="1096.1" y2="365.5"/><line x1="1018.8" y1="369.5" x2="1022.3" y2="369.5"/><line x1="1092.6" y1="369.5" x2="1096.1" y2="369.5"/><line x1="1018.8" y1="373.5" x2="1022.3" y2="373.5"/><line x1="1092.6" y1="373.5" x2="1096.1" y2="373.5"/><line x1="1018.8" y1="377.5" x2="1022.3" y2="377.5"/><line x1="1092.6" y1="377.5" x2="1096.1" y2="377.5"/><line x1="1018.8" y1="381.5" x2="1022.3" y2="381.5"/><line x1="1092.6" y1="381.5" x2="1096.1" y2="381.5"/><line x1="1018.8" y1="385.5" x2="1022.3" y2="385.5"/><line x1="1092.6" y1="385.5" x2="1096.1" y2="385.5"/><line x1="1018.8" y1="389.5" x2="1022.3" y2="389.5"/><line x1="1092.6" y1="389.5" x2="1096.1" y2="389.5"/><line x1="1018.8" y1="394.5" x2="1022.3" y2="394.5"/><line x1="1092.6" y1="394.5" x2="1096.1" y2="394.5"/><line x1="1018.8" y1="398.5" x2="1022.3" y2="398.5"/><line x1="1092.6" y1="398.5" x2="1096.1" y2="398.5"/><line x1="1018.8" y1="402.5" x2="1022.3" y2="402.5"/><line x1="1092.6" y1="402.5" x2="1096.1" y2="402.5"/><line x1="1018.8" y1="406.5" x2="1022.3" y2="406.5"/><line x1="1092.6" y1="406.5" x2="1096.1" y2="406.5"/><line x1="1018.8" y1="410.5" x2="1022.3" y2="410.5"/><line x1="1092.6" y1="410.5" x2="1096.1" y2="410.5"/><line x1="1018.8" y1="414.5" x2="1022.3" y2="414.5"/><line x1="1092.6" y1="414.5" x2="1096.1" y2="414.5"/><line x1="1018.8" y1="418.5" x2="1022.3" y2="418.5"/><line x1="1092.6" y1="418.5" x2="1096.1" y2="418.5"/><line x1="1018.8" y1="422.5" x2="1022.3" y2="422.5"/><line x1="1092.6" y1="422.5" x2="1096.1" y2="422.5"/><line x1="1018.8" y1="426.5" x2="1022.3" y2="426.5"/><line x1="1092.6" y1="426.5" x2="1096.1" y2="426.5"/><line x1="1018.8" y1="430.5" x2="1022.3" y2="430.5"/><line x1="1092.6" y1="430.5" x2="1096.1" y2="430.5"/><line x1="1018.8" y1="434.5" x2="1022.3" y2="434.5"/><line x1="1092.6" y1="434.5" x2="1096.1" y2="434.5"/><line x1="1018.8" y1="438.5" x2="1022.3" y2="438.5"/><line x1="1092.6" y1="438.5" x2="1096.1" y2="438.5"/><line x1="1018.8" y1="442.5" x2="1022.3" y2="442.5"/><line x1="1092.6" y1="442.5" x2="1096.1" y2="442.5"/><line x1="1018.8" y1="446.5" x2="1022.3" y2="446.5"/><line x1="1092.6" y1="446.5" x2="1096.1" y2="446.5"/><line x1="1018.8" y1="450.5" x2="1022.3" y2="450.5"/><line x1="1092.6" y1="450.5" x2="1096.1" y2="450.5"/><line x1="1018.8" y1="454.5" x2="1022.3" y2="454.5"/><line x1="1092.6" y1="454.5" x2="1096.1" y2="454.5"/><line x1="1018.8" y1="458.5" x2="1022.3" y2="458.5"/><line x1="1092.6" y1="458.5" x2="1096.1" y2="458.5"/><line x1="1018.8" y1="462.5" x2="1022.3" y2="462.5"/><line x1="1092.6" y1="462.5" x2="1096.1" y2="462.5"/><line x1="1018.8" y1="466.5" x2="1022.3" y2="466.5"/><line x1="1092.6" y1="466.5" x2="1096.1" y2="466.5"/><line x1="1018.8" y1="470.5" x2="1022.3" y2="470.5"/><line x1="1092.6" y1="470.5" x2="1096.1" y2="470.5"/><line x1="1018.8" y1="474.5" x2="1022.3" y2="474.5"/><line x1="1092.6" y1="474.5" x2="1096.1" y2="474.5"/></g><g fill="none" stroke="#a8a8a8" stroke-width="1" shape-rendering="crispEdges"><line x1="1011.9" y1="320.5" x2="1015.9" y2="320.5"/><line x1="1098.7" y1="320.5" x2="1102.7" y2="320.5"/><line x1="1011.9" y1="324.5" x2="1015.9" y2="324.5"/><line x1="1098.7" y1="324.5" x2="1102.7" y2="324.5"/><line x1="1011.9" y1="328.5" x2="1015.9" y2="328.5"/><line x1="1098.7" y1="328.5" x2="1102.7" y2="328.5"/><line x1="1011.9" y1="332.5" x2="1015.9" y2="332.5"/><line x1="1098.7" y1="332.5" x2="1102.7" y2="332.5"/><line x1="1011.9" y1="336.5" x2="1015.9" y2="336.5"/><line x1="1098.7" y1="336.5" x2="1102.7" y2="336.5"/><line x1="1011.9" y1="340.5" x2="1015.9" y2="340.5"/><line x1="1098.7" y1="340.5" x2="1102.7" y2="340.5"/><line x1="1011.9" y1="344.5" x2="1015.9" y2="344.5"/><line x1="1098.7" y1="344.5" x2="1102.7" y2="344.5"/><line x1="1011.9" y1="348.5" x2="1015.9" y2="348.5"/><line x1="1098.7" y1="348.5" x2="1102.7" y2="348.5"/><line x1="1011.9" y1="352.5" x2="1015.9" y2="352.5"/><line x1="1098.7" y1="352.5" x2="1102.7" y2="352.5"/><line x1="1011.9" y1="356.5" x2="1015.9" y2="356.5"/><line x1="1098.7" y1="356.5" x2="1102.7" y2="356.5"/><line x1="1011.9" y1="360.5" x2="1015.9" y2="360.5"/><line x1="1098.7" y1="360.5" x2="1102.7" y2="360.5"/><line x1="1011.9" y1="364.5" x2="1015.9" y2="364.5"/><line x1="1098.7" y1="364.5" x2="1102.7" y2="364.5"/><line x1="1011.9" y1="368.5" x2="1015.9" y2="368.5"/><line x1="1098.7" y1="368.5" x2="1102.7" y2="368.5"/><line x1="1011.9" y1="372.5" x2="1015.9" y2="372.5"/><line x1="1098.7" y1="372.5" x2="1102.7" y2="372.5"/><line x1="1011.9" y1="376.5" x2="1015.9" y2="376.5"/><line x1="1098.7" y1="376.5" x2="1102.7" y2="376.5"/><line x1="1011.9" y1="380.5" x2="1015.9" y2="380.5"/><line x1="1098.7" y1="380.5" x2="1102.7" y2="380.5"/><line x1="1011.9" y1="384.5" x2="1015.9" y2="384.5"/><line x1="1098.7" y1="384.5" x2="1102.7" y2="384.5"/><line x1="1011.9" y1="388.5" x2="1015.9" y2="388.5"/><line x1="1098.7" y1="388.5" x2="1102.7" y2="388.5"/><line x1="1011.9" y1="393.5" x2="1015.9" y2="393.5"/><line x1="1098.7" y1="393.5" x2="1102.7" y2="393.5"/><line x1="1011.9" y1="397.5" x2="1015.9" y2="397.5"/><line x1="1098.7" y1="397.5" x2="1102.7" y2="397.5"/><line x1="1011.9" y1="401.5" x2="1015.9" y2="401.5"/><line x1="1098.7" y1="401.5" x2="1102.7" y2="401.5"/><line x1="1011.9" y1="405.5" x2="1015.9" y2="405.5"/><line x1="1098.7" y1="405.5" x2="1102.7" y2="405.5"/><line x1="1011.9" y1="409.5" x2="1015.9" y2="409.5"/><line x1="1098.7" y1="409.5" x2="1102.7" y2="409.5"/><line x1="1011.9" y1="413.5" x2="1015.9" y2="413.5"/><line x1="1098.7" y1="413.5" x2="1102.7" y2="413.5"/><line x1="1011.9" y1="417.5" x2="1015.9" y2="417.5"/><line x1="1098.7" y1="417.5" x2="1102.7" y2="417.5"/><line x1="1011.9" y1="421.5" x2="1015.9" y2="421.5"/><line x1="1098.7" y1="421.5" x2="1102.7" y2="421.5"/><line x1="1011.9" y1="425.5" x2="1015.9" y2="425.5"/><line x1="1098.7" y1="425.5" x2="1102.7" y2="425.5"/><line x1="1011.9" y1="429.5" x2="1015.9" y2="429.5"/><line x1="1098.7" y1="429.5" x2="1102.7" y2="429.5"/><line x1="1011.9" y1="433.5" x2="1015.9" y2="433.5"/><line x1="1098.7" y1="433.5" x2="1102.7" y2="433.5"/><line x1="1011.9" y1="437.5" x2="1015.9" y2="437.5"/><line x1="1098.7" y1="437.5" x2="1102.7" y2="437.5"/><line x1="1011.9" y1="441.5" x2="1015.9" y2="441.5"/><line x1="1098.7" y1="441.5" x2="1102.7" y2="441.5"/><line x1="1011.9" y1="445.5" x2="1015.9" y2="445.5"/><line x1="1098.7" y1="445.5" x2="1102.7" y2="445.5"/><line x1="1011.9" y1="449.5" x2="1015.9" y2="449.5"/><line x1="1098.7" y1="449.5" x2="1102.7" y2="449.5"/><line x1="1011.9" y1="453.5" x2="1015.9" y2="453.5"/><line x1="1098.7" y1="453.5" x2="1102.7" y2="453.5"/><line x1="1011.9" y1="457.5" x2="1015.9" y2="457.5"/><line x1="1098.7" y1="457.5" x2="1102.7" y2="457.5"/><line x1="1011.9" y1="461.5" x2="1015.9" y2="461.5"/><line x1="1098.7" y1="461.5" x2="1102.7" y2="461.5"/><line x1="1011.9" y1="465.5" x2="1015.9" y2="465.5"/><line x1="1098.7" y1="465.5" x2="1102.7" y2="465.5"/><line x1="1011.9" y1="469.5" x2="1015.9" y2="469.5"/><line x1="1098.7" y1="469.5" x2="1102.7" y2="469.5"/><line x1="1011.9" y1="473.5" x2="1015.9" y2="473.5"/><line x1="1098.7" y1="473.5" x2="1102.7" y2="473.5"/><line x1="1029.3" y1="313.5" x2="1041.3" y2="313.5"/><line x1="1073.6" y1="313.5" x2="1085.6" y2="313.5"/></g><g fill="#000"><circle cx="1008.9" cy="321.5" r="1.8"/><circle cx="1105.7" cy="321.5" r="1.8"/><circle cx="1008.9" cy="325.5" r="1.8"/><circle cx="1105.7" cy="325.5" r="1.8"/><circle cx="1008.9" cy="329.5" r="1.8"/><circle cx="1105.7" cy="329.5" r="1.8"/><circle cx="1008.9" cy="333.5" r="1.8"/><circle cx="1105.7" cy="333.5" r="1.8"/><circle cx="1008.9" cy="337.5" r="1.8"/><circle cx="1105.7" cy="337.5" r="1.8"/><circle cx="1008.9" cy="341.5" r="1.8"/><circle cx="1105.7" cy="341.5" r="1.8"/><circle cx="1008.9" cy="345.5" r="1.8"/><circle cx="1105.7" cy="345.5" r="1.8"/><circle cx="1008.9" cy="349.5" r="1.8"/><circle cx="1105.7" cy="349.5" r="1.8"/><circle cx="1008.9" cy="353.5" r="1.8"/><circle cx="1105.7" cy="353.5" r="1.8"/><circle cx="1008.9" cy="357.5" r="1.8"/><circle cx="1105.7" cy="357.5" r="1.8"/><circle cx="1008.9" cy="361.5" r="1.8"/><circle cx="1105.7" cy="361.5" r="1.8"/><circle cx="1008.9" cy="365.5" r="1.8"/><circle cx="1105.7" cy="365.5" r="1.8"/><circle cx="1008.9" cy="369.5" r="1.8"/><circle cx="1105.7" cy="369.5" r="1.8"/><circle cx="1008.9" cy="373.5" r="1.8"/><circle cx="1105.7" cy="373.5" r="1.8"/><circle cx="1008.9" cy="377.5" r="1.8"/><circle cx="1105.7" cy="377.5" r="1.8"/><circle cx="1008.9" cy="381.5" r="1.8"/><circle cx="1105.7" cy="381.5" r="1.8"/><circle cx="1008.9" cy="385.5" r="1.8"/><circle cx="1105.7" cy="385.5" r="1.8"/><circle cx="1008.9" cy="389.5" r="1.8"/><circle cx="1105.7" cy="389.5" r="1.8"/><circle cx="1008.9" cy="394.5" r="1.8"/><circle cx="1105.7" cy="394.5" r="1.8"/><circle cx="1008.9" cy="398.5" r="1.8"/><circle cx="1105.7" cy="398.5" r="1.8"/><circle cx="1008.9" cy="402.5" r="1.8"/><circle cx="1105.7" cy="402.5" r="1.8"/><circle cx="1008.9" cy="406.5" r="1.8"/><circle cx="1105.7" cy="406.5" r="1.8"/><circle cx="1008.9" cy="410.5" r="1.8"/><circle cx="1105.7" cy="410.5" r="1.8"/><circle cx="1008.9" cy="414.5" r="1.8"/><circle cx="1105.7" cy="414.5" r="1.8"/><circle cx="1008.9" cy="418.5" r="1.8"/><circle cx="1105.7" cy="418.5" r="1.8"/><circle cx="1008.9" cy="422.5" r="1.8"/><circle cx="1105.7" cy="422.5" r="1.8"/><circle cx="1008.9" cy="426.5" r="1.8"/><circle cx="1105.7" cy="426.5" r="1.8"/><circle cx="1008.9" cy="430.5" r="1.8"/><circle cx="1105.7" cy="430.5" r="1.8"/><circle cx="1008.9" cy="434.5" r="1.8"/><circle cx="1105.7" cy="434.5" r="1.8"/><circle cx="1008.9" cy="438.5" r="1.8"/><circle cx="1105.7" cy="438.5" r="1.8"/><circle cx="1008.9" cy="442.5" r="1.8"/><circle cx="1105.7" cy="442.5" r="1.8"/><circle cx="1008.9" cy="446.5" r="1.8"/><circle cx="1105.7" cy="446.5" r="1.8"/><circle cx="1008.9" cy="450.5" r="1.8"/><circle cx="1105.7" cy="450.5" r="1.8"/><circle cx="1008.9" cy="454.5" r="1.8"/><circle cx="1105.7" cy="454.5" r="1.8"/><circle cx="1008.9" cy="458.5" r="1.8"/><circle cx="1105.7" cy="458.5" r="1.8"/><circle cx="1008.9" cy="462.5" r="1.8"/><circle cx="1105.7" cy="462.5" r="1.8"/><circle cx="1008.9" cy="466.5" r="1.8"/><circle cx="1105.7" cy="466.5" r="1.8"/><circle cx="1008.9" cy="470.5" r="1.8"/><circle cx="1105.7" cy="470.5" r="1.8"/><circle cx="1008.9" cy="474.5" r="1.8"/><circle cx="1105.7" cy="474.5" r="1.8"/><path d="M1011.9 478.2 h-6 l3 5z"/><path d="M1108.7 478.2 h-6 l3 5z"/></g><line x1="1017.3" y1="307" x2="1097.6" y2="307" stroke="#666" stroke-width=".6"/><g fill="none" stroke="#a0a0a0" stroke-width="1" shape-rendering="crispEdges"><rect x="1188.5" y="321.6" width="80.1" height="228.8"/><line x1="1188.5" y1="325.2" x2="1268.6" y2="325.2"/><line x1="1188.5" y1="329.8" x2="1268.6" y2="329.8"/><line x1="1228.5" y1="325.2" x2="1228.5" y2="546.4"/><line x1="1188.5" y1="546.4" x2="1268.6" y2="546.4"/></g><g fill="none" stroke="#909090" stroke-width=".8"><line x1="1180.3" y1="334.5" x2="1180.3" y2="550.4"/><line x1="1277.0" y1="334.5" x2="1277.0" y2="550.4"/></g><g fill="none" stroke="#bdbdbd" stroke-width="1" shape-rendering="crispEdges"><line x1="1180.3" y1="334.5" x2="1188.5" y2="334.5"/><line x1="1268.6" y1="334.5" x2="1277.0" y2="334.5"/><line x1="1180.3" y1="338.5" x2="1188.5" y2="338.5"/><line x1="1268.6" y1="338.5" x2="1277.0" y2="338.5"/><line x1="1180.3" y1="342.5" x2="1188.5" y2="342.5"/><line x1="1268.6" y1="342.5" x2="1277.0" y2="342.5"/><line x1="1180.3" y1="347.5" x2="1188.5" y2="347.5"/><line x1="1268.6" y1="347.5" x2="1277.0" y2="347.5"/><line x1="1180.3" y1="351.5" x2="1188.5" y2="351.5"/><line x1="1268.6" y1="351.5" x2="1277.0" y2="351.5"/><line x1="1180.3" y1="355.5" x2="1188.5" y2="355.5"/><line x1="1268.6" y1="355.5" x2="1277.0" y2="355.5"/><line x1="1180.3" y1="359.5" x2="1188.5" y2="359.5"/><line x1="1268.6" y1="359.5" x2="1277.0" y2="359.5"/><line x1="1180.3" y1="363.5" x2="1188.5" y2="363.5"/><line x1="1268.6" y1="363.5" x2="1277.0" y2="363.5"/><line x1="1180.3" y1="367.5" x2="1188.5" y2="367.5"/><line x1="1268.6" y1="367.5" x2="1277.0" y2="367.5"/><line x1="1180.3" y1="371.5" x2="1188.5" y2="371.5"/><line x1="1268.6" y1="371.5" x2="1277.0" y2="371.5"/><line x1="1180.3" y1="375.5" x2="1188.5" y2="375.5"/><line x1="1268.6" y1="375.5" x2="1277.0" y2="375.5"/><line x1="1180.3" y1="379.5" x2="1188.5" y2="379.5"/><line x1="1268.6" y1="379.5" x2="1277.0" y2="379.5"/><line x1="1180.3" y1="383.5" x2="1188.5" y2="383.5"/><line x1="1268.6" y1="383.5" x2="1277.0" y2="383.5"/><line x1="1180.3" y1="387.5" x2="1188.5" y2="387.5"/><line x1="1268.6" y1="387.5" x2="1277.0" y2="387.5"/><line x1="1180.3" y1="391.5" x2="1188.5" y2="391.5"/><line x1="1268.6" y1="391.5" x2="1277.0" y2="391.5"/><line x1="1180.3" y1="395.5" x2="1188.5" y2="395.5"/><line x1="1268.6" y1="395.5" x2="1277.0" y2="395.5"/><line x1="1180.3" y1="399.5" x2="1188.5" y2="399.5"/><line x1="1268.6" y1="399.5" x2="1277.0" y2="399.5"/><line x1="1180.3" y1="403.5" x2="1188.5" y2="403.5"/><line x1="1268.6" y1="403.5" x2="1277.0" y2="403.5"/><line x1="1180.3" y1="407.5" x2="1188.5" y2="407.5"/><line x1="1268.6" y1="407.5" x2="1277.0" y2="407.5"/><line x1="1180.3" y1="411.5" x2="1188.5" y2="411.5"/><line x1="1268.6" y1="411.5" x2="1277.0" y2="411.5"/><line x1="1180.3" y1="415.5" x2="1188.5" y2="415.5"/><line x1="1268.6" y1="415.5" x2="1277.0" y2="415.5"/><line x1="1180.3" y1="419.5" x2="1188.5" y2="419.5"/><line x1="1268.6" y1="419.5" x2="1277.0" y2="419.5"/><line x1="1180.3" y1="423.5" x2="1188.5" y2="423.5"/><line x1="1268.6" y1="423.5" x2="1277.0" y2="423.5"/><line x1="1180.3" y1="427.5" x2="1188.5" y2="427.5"/><line x1="1268.6" y1="427.5" x2="1277.0" y2="427.5"/><line x1="1180.3" y1="431.5" x2="1188.5" y2="431.5"/><line x1="1268.6" y1="431.5" x2="1277.0" y2="431.5"/><line x1="1180.3" y1="435.5" x2="1188.5" y2="435.5"/><line x1="1268.6" y1="435.5" x2="1277.0" y2="435.5"/><line x1="1180.3" y1="439.5" x2="1188.5" y2="439.5"/><line x1="1268.6" y1="439.5" x2="1277.0" y2="439.5"/><line x1="1180.3" y1="443.5" x2="1188.5" y2="443.5"/><line x1="1268.6" y1="443.5" x2="1277.0" y2="443.5"/><line x1="1180.3" y1="448.5" x2="1188.5" y2="448.5"/><line x1="1268.6" y1="448.5" x2="1277.0" y2="448.5"/><line x1="1180.3" y1="452.5" x2="1188.5" y2="452.5"/><line x1="1268.6" y1="452.5" x2="1277.0" y2="452.5"/><line x1="1180.3" y1="456.5" x2="1188.5" y2="456.5"/><line x1="1268.6" y1="456.5" x2="1277.0" y2="456.5"/><line x1="1180.3" y1="460.5" x2="1188.5" y2="460.5"/><line x1="1268.6" y1="460.5" x2="1277.0" y2="460.5"/><line x1="1180.3" y1="464.5" x2="1188.5" y2="464.5"/><line x1="1268.6" y1="464.5" x2="1277.0" y2="464.5"/><line x1="1180.3" y1="468.5" x2="1188.5" y2="468.5"/><line x1="1268.6" y1="468.5" x2="1277.0" y2="468.5"/><line x1="1180.3" y1="472.5" x2="1188.5" y2="472.5"/><line x1="1268.6" y1="472.5" x2="1277.0" y2="472.5"/><line x1="1180.3" y1="476.5" x2="1188.5" y2="476.5"/><line x1="1268.6" y1="476.5" x2="1277.0" y2="476.5"/><line x1="1180.3" y1="480.5" x2="1188.5" y2="480.5"/><line x1="1268.6" y1="480.5" x2="1277.0" y2="480.5"/><line x1="1180.3" y1="484.5" x2="1188.5" y2="484.5"/><line x1="1268.6" y1="484.5" x2="1277.0" y2="484.5"/><line x1="1180.3" y1="488.5" x2="1188.5" y2="488.5"/><line x1="1268.6" y1="488.5" x2="1277.0" y2="488.5"/><line x1="1180.3" y1="492.5" x2="1188.5" y2="492.5"/><line x1="1268.6" y1="492.5" x2="1277.0" y2="492.5"/><line x1="1180.3" y1="496.5" x2="1188.5" y2="496.5"/><line x1="1268.6" y1="496.5" x2="1277.0" y2="496.5"/><line x1="1180.3" y1="500.5" x2="1188.5" y2="500.5"/><line x1="1268.6" y1="500.5" x2="1277.0" y2="500.5"/><line x1="1180.3" y1="504.5" x2="1188.5" y2="504.5"/><line x1="1268.6" y1="504.5" x2="1277.0" y2="504.5"/><line x1="1180.3" y1="508.5" x2="1188.5" y2="508.5"/><line x1="1268.6" y1="508.5" x2="1277.0" y2="508.5"/><line x1="1180.3" y1="512.5" x2="1188.5" y2="512.5"/><line x1="1268.6" y1="512.5" x2="1277.0" y2="512.5"/><line x1="1180.3" y1="516.5" x2="1188.5" y2="516.5"/><line x1="1268.6" y1="516.5" x2="1277.0" y2="516.5"/><line x1="1180.3" y1="520.5" x2="1188.5" y2="520.5"/><line x1="1268.6" y1="520.5" x2="1277.0" y2="520.5"/><line x1="1180.3" y1="524.5" x2="1188.5" y2="524.5"/><line x1="1268.6" y1="524.5" x2="1277.0" y2="524.5"/><line x1="1180.3" y1="528.5" x2="1188.5" y2="528.5"/><line x1="1268.6" y1="528.5" x2="1277.0" y2="528.5"/><line x1="1180.3" y1="532.5" x2="1188.5" y2="532.5"/><line x1="1268.6" y1="532.5" x2="1277.0" y2="532.5"/><line x1="1180.3" y1="536.5" x2="1188.5" y2="536.5"/><line x1="1268.6" y1="536.5" x2="1277.0" y2="536.5"/><line x1="1180.3" y1="540.5" x2="1188.5" y2="540.5"/><line x1="1268.6" y1="540.5" x2="1277.0" y2="540.5"/><line x1="1180.3" y1="544.5" x2="1188.5" y2="544.5"/><line x1="1268.6" y1="544.5" x2="1277.0" y2="544.5"/></g><g fill="none" stroke="#c4c4c4" stroke-width="1" shape-rendering="crispEdges"><line x1="1190.0" y1="334.5" x2="1193.5" y2="334.5"/><line x1="1263.6" y1="334.5" x2="1267.1" y2="334.5"/><line x1="1190.0" y1="338.5" x2="1193.5" y2="338.5"/><line x1="1263.6" y1="338.5" x2="1267.1" y2="338.5"/><line x1="1190.0" y1="342.5" x2="1193.5" y2="342.5"/><line x1="1263.6" y1="342.5" x2="1267.1" y2="342.5"/><line x1="1190.0" y1="347.5" x2="1193.5" y2="347.5"/><line x1="1263.6" y1="347.5" x2="1267.1" y2="347.5"/><line x1="1190.0" y1="351.5" x2="1193.5" y2="351.5"/><line x1="1263.6" y1="351.5" x2="1267.1" y2="351.5"/><line x1="1190.0" y1="355.5" x2="1193.5" y2="355.5"/><line x1="1263.6" y1="355.5" x2="1267.1" y2="355.5"/><line x1="1190.0" y1="359.5" x2="1193.5" y2="359.5"/><line x1="1263.6" y1="359.5" x2="1267.1" y2="359.5"/><line x1="1190.0" y1="363.5" x2="1193.5" y2="363.5"/><line x1="1263.6" y1="363.5" x2="1267.1" y2="363.5"/><line x1="1190.0" y1="367.5" x2="1193.5" y2="367.5"/><line x1="1263.6" y1="367.5" x2="1267.1" y2="367.5"/><line x1="1190.0" y1="371.5" x2="1193.5" y2="371.5"/><line x1="1263.6" y1="371.5" x2="1267.1" y2="371.5"/><line x1="1190.0" y1="375.5" x2="1193.5" y2="375.5"/><line x1="1263.6" y1="375.5" x2="1267.1" y2="375.5"/><line x1="1190.0" y1="379.5" x2="1193.5" y2="379.5"/><line x1="1263.6" y1="379.5" x2="1267.1" y2="379.5"/><line x1="1190.0" y1="383.5" x2="1193.5" y2="383.5"/><line x1="1263.6" y1="383.5" x2="1267.1" y2="383.5"/><line x1="1190.0" y1="387.5" x2="1193.5" y2="387.5"/><line x1="1263.6" y1="387.5" x2="1267.1" y2="387.5"/><line x1="1190.0" y1="391.5" x2="1193.5" y2="391.5"/><line x1="1263.6" y1="391.5" x2="1267.1" y2="391.5"/><line x1="1190.0" y1="395.5" x2="1193.5" y2="395.5"/><line x1="1263.6" y1="395.5" x2="1267.1" y2="395.5"/><line x1="1190.0" y1="399.5" x2="1193.5" y2="399.5"/><line x1="1263.6" y1="399.5" x2="1267.1" y2="399.5"/><line x1="1190.0" y1="403.5" x2="1193.5" y2="403.5"/><line x1="1263.6" y1="403.5" x2="1267.1" y2="403.5"/><line x1="1190.0" y1="407.5" x2="1193.5" y2="407.5"/><line x1="1263.6" y1="407.5" x2="1267.1" y2="407.5"/><line x1="1190.0" y1="411.5" x2="1193.5" y2="411.5"/><line x1="1263.6" y1="411.5" x2="1267.1" y2="411.5"/><line x1="1190.0" y1="415.5" x2="1193.5" y2="415.5"/><line x1="1263.6" y1="415.5" x2="1267.1" y2="415.5"/><line x1="1190.0" y1="419.5" x2="1193.5" y2="419.5"/><line x1="1263.6" y1="419.5" x2="1267.1" y2="419.5"/><line x1="1190.0" y1="423.5" x2="1193.5" y2="423.5"/><line x1="1263.6" y1="423.5" x2="1267.1" y2="423.5"/><line x1="1190.0" y1="427.5" x2="1193.5" y2="427.5"/><line x1="1263.6" y1="427.5" x2="1267.1" y2="427.5"/><line x1="1190.0" y1="431.5" x2="1193.5" y2="431.5"/><line x1="1263.6" y1="431.5" x2="1267.1" y2="431.5"/><line x1="1190.0" y1="435.5" x2="1193.5" y2="435.5"/><line x1="1263.6" y1="435.5" x2="1267.1" y2="435.5"/><line x1="1190.0" y1="439.5" x2="1193.5" y2="439.5"/><line x1="1263.6" y1="439.5" x2="1267.1" y2="439.5"/><line x1="1190.0" y1="443.5" x2="1193.5" y2="443.5"/><line x1="1263.6" y1="443.5" x2="1267.1" y2="443.5"/><line x1="1190.0" y1="448.5" x2="1193.5" y2="448.5"/><line x1="1263.6" y1="448.5" x2="1267.1" y2="448.5"/><line x1="1190.0" y1="452.5" x2="1193.5" y2="452.5"/><line x1="1263.6" y1="452.5" x2="1267.1" y2="452.5"/><line x1="1190.0" y1="456.5" x2="1193.5" y2="456.5"/><line x1="1263.6" y1="456.5" x2="1267.1" y2="456.5"/><line x1="1190.0" y1="460.5" x2="1193.5" y2="460.5"/><line x1="1263.6" y1="460.5" x2="1267.1" y2="460.5"/><line x1="1190.0" y1="464.5" x2="1193.5" y2="464.5"/><line x1="1263.6" y1="464.5" x2="1267.1" y2="464.5"/><line x1="1190.0" y1="468.5" x2="1193.5" y2="468.5"/><line x1="1263.6" y1="468.5" x2="1267.1" y2="468.5"/><line x1="1190.0" y1="472.5" x2="1193.5" y2="472.5"/><line x1="1263.6" y1="472.5" x2="1267.1" y2="472.5"/><line x1="1190.0" y1="476.5" x2="1193.5" y2="476.5"/><line x1="1263.6" y1="476.5" x2="1267.1" y2="476.5"/><line x1="1190.0" y1="480.5" x2="1193.5" y2="480.5"/><line x1="1263.6" y1="480.5" x2="1267.1" y2="480.5"/><line x1="1190.0" y1="484.5" x2="1193.5" y2="484.5"/><line x1="1263.6" y1="484.5" x2="1267.1" y2="484.5"/><line x1="1190.0" y1="488.5" x2="1193.5" y2="488.5"/><line x1="1263.6" y1="488.5" x2="1267.1" y2="488.5"/><line x1="1190.0" y1="492.5" x2="1193.5" y2="492.5"/><line x1="1263.6" y1="492.5" x2="1267.1" y2="492.5"/><line x1="1190.0" y1="496.5" x2="1193.5" y2="496.5"/><line x1="1263.6" y1="496.5" x2="1267.1" y2="496.5"/><line x1="1190.0" y1="500.5" x2="1193.5" y2="500.5"/><line x1="1263.6" y1="500.5" x2="1267.1" y2="500.5"/><line x1="1190.0" y1="504.5" x2="1193.5" y2="504.5"/><line x1="1263.6" y1="504.5" x2="1267.1" y2="504.5"/><line x1="1190.0" y1="508.5" x2="1193.5" y2="508.5"/><line x1="1263.6" y1="508.5" x2="1267.1" y2="508.5"/><line x1="1190.0" y1="512.5" x2="1193.5" y2="512.5"/><line x1="1263.6" y1="512.5" x2="1267.1" y2="512.5"/><line x1="1190.0" y1="516.5" x2="1193.5" y2="516.5"/><line x1="1263.6" y1="516.5" x2="1267.1" y2="516.5"/><line x1="1190.0" y1="520.5" x2="1193.5" y2="520.5"/><line x1="1263.6" y1="520.5" x2="1267.1" y2="520.5"/><line x1="1190.0" y1="524.5" x2="1193.5" y2="524.5"/><line x1="1263.6" y1="524.5" x2="1267.1" y2="524.5"/><line x1="1190.0" y1="528.5" x2="1193.5" y2="528.5"/><line x1="1263.6" y1="528.5" x2="1267.1" y2="528.5"/><line x1="1190.0" y1="532.5" x2="1193.5" y2="532.5"/><line x1="1263.6" y1="532.5" x2="1267.1" y2="532.5"/><line x1="1190.0" y1="536.5" x2="1193.5" y2="536.5"/><line x1="1263.6" y1="536.5" x2="1267.1" y2="536.5"/><line x1="1190.0" y1="540.5" x2="1193.5" y2="540.5"/><line x1="1263.6" y1="540.5" x2="1267.1" y2="540.5"/><line x1="1190.0" y1="544.5" x2="1193.5" y2="544.5"/><line x1="1263.6" y1="544.5" x2="1267.1" y2="544.5"/></g><g fill="none" stroke="#a8a8a8" stroke-width="1" shape-rendering="crispEdges"><line x1="1183.3" y1="333.5" x2="1187.3" y2="333.5"/><line x1="1270.0" y1="333.5" x2="1274.0" y2="333.5"/><line x1="1183.3" y1="337.5" x2="1187.3" y2="337.5"/><line x1="1270.0" y1="337.5" x2="1274.0" y2="337.5"/><line x1="1183.3" y1="341.5" x2="1187.3" y2="341.5"/><line x1="1270.0" y1="341.5" x2="1274.0" y2="341.5"/><line x1="1183.3" y1="346.5" x2="1187.3" y2="346.5"/><line x1="1270.0" y1="346.5" x2="1274.0" y2="346.5"/><line x1="1183.3" y1="350.5" x2="1187.3" y2="350.5"/><line x1="1270.0" y1="350.5" x2="1274.0" y2="350.5"/><line x1="1183.3" y1="354.5" x2="1187.3" y2="354.5"/><line x1="1270.0" y1="354.5" x2="1274.0" y2="354.5"/><line x1="1183.3" y1="358.5" x2="1187.3" y2="358.5"/><line x1="1270.0" y1="358.5" x2="1274.0" y2="358.5"/><line x1="1183.3" y1="362.5" x2="1187.3" y2="362.5"/><line x1="1270.0" y1="362.5" x2="1274.0" y2="362.5"/><line x1="1183.3" y1="366.5" x2="1187.3" y2="366.5"/><line x1="1270.0" y1="366.5" x2="1274.0" y2="366.5"/><line x1="1183.3" y1="370.5" x2="1187.3" y2="370.5"/><line x1="1270.0" y1="370.5" x2="1274.0" y2="370.5"/><line x1="1183.3" y1="374.5" x2="1187.3" y2="374.5"/><line x1="1270.0" y1="374.5" x2="1274.0" y2="374.5"/><line x1="1183.3" y1="378.5" x2="1187.3" y2="378.5"/><line x1="1270.0" y1="378.5" x2="1274.0" y2="378.5"/><line x1="1183.3" y1="382.5" x2="1187.3" y2="382.5"/><line x1="1270.0" y1="382.5" x2="1274.0" y2="382.5"/><line x1="1183.3" y1="386.5" x2="1187.3" y2="386.5"/><line x1="1270.0" y1="386.5" x2="1274.0" y2="386.5"/><line x1="1183.3" y1="390.5" x2="1187.3" y2="390.5"/><line x1="1270.0" y1="390.5" x2="1274.0" y2="390.5"/><line x1="1183.3" y1="394.5" x2="1187.3" y2="394.5"/><line x1="1270.0" y1="394.5" x2="1274.0" y2="394.5"/><line x1="1183.3" y1="398.5" x2="1187.3" y2="398.5"/><line x1="1270.0" y1="398.5" x2="1274.0" y2="398.5"/><line x1="1183.3" y1="402.5" x2="1187.3" y2="402.5"/><line x1="1270.0" y1="402.5" x2="1274.0" y2="402.5"/><line x1="1183.3" y1="406.5" x2="1187.3" y2="406.5"/><line x1="1270.0" y1="406.5" x2="1274.0" y2="406.5"/><line x1="1183.3" y1="410.5" x2="1187.3" y2="410.5"/><line x1="1270.0" y1="410.5" x2="1274.0" y2="410.5"/><line x1="1183.3" y1="414.5" x2="1187.3" y2="414.5"/><line x1="1270.0" y1="414.5" x2="1274.0" y2="414.5"/><line x1="1183.3" y1="418.5" x2="1187.3" y2="418.5"/><line x1="1270.0" y1="418.5" x2="1274.0" y2="418.5"/><line x1="1183.3" y1="422.5" x2="1187.3" y2="422.5"/><line x1="1270.0" y1="422.5" x2="1274.0" y2="422.5"/><line x1="1183.3" y1="426.5" x2="1187.3" y2="426.5"/><line x1="1270.0" y1="426.5" x2="1274.0" y2="426.5"/><line x1="1183.3" y1="430.5" x2="1187.3" y2="430.5"/><line x1="1270.0" y1="430.5" x2="1274.0" y2="430.5"/><line x1="1183.3" y1="434.5" x2="1187.3" y2="434.5"/><line x1="1270.0" y1="434.5" x2="1274.0" y2="434.5"/><line x1="1183.3" y1="438.5" x2="1187.3" y2="438.5"/><line x1="1270.0" y1="438.5" x2="1274.0" y2="438.5"/><line x1="1183.3" y1="442.5" x2="1187.3" y2="442.5"/><line x1="1270.0" y1="442.5" x2="1274.0" y2="442.5"/><line x1="1183.3" y1="447.5" x2="1187.3" y2="447.5"/><line x1="1270.0" y1="447.5" x2="1274.0" y2="447.5"/><line x1="1183.3" y1="451.5" x2="1187.3" y2="451.5"/><line x1="1270.0" y1="451.5" x2="1274.0" y2="451.5"/><line x1="1183.3" y1="455.5" x2="1187.3" y2="455.5"/><line x1="1270.0" y1="455.5" x2="1274.0" y2="455.5"/><line x1="1183.3" y1="459.5" x2="1187.3" y2="459.5"/><line x1="1270.0" y1="459.5" x2="1274.0" y2="459.5"/><line x1="1183.3" y1="463.5" x2="1187.3" y2="463.5"/><line x1="1270.0" y1="463.5" x2="1274.0" y2="463.5"/><line x1="1183.3" y1="467.5" x2="1187.3" y2="467.5"/><line x1="1270.0" y1="467.5" x2="1274.0" y2="467.5"/><line x1="1183.3" y1="471.5" x2="1187.3" y2="471.5"/><line x1="1270.0" y1="471.5" x2="1274.0" y2="471.5"/><line x1="1183.3" y1="475.5" x2="1187.3" y2="475.5"/><line x1="1270.0" y1="475.5" x2="1274.0" y2="475.5"/><line x1="1183.3" y1="479.5" x2="1187.3" y2="479.5"/><line x1="1270.0" y1="479.5" x2="1274.0" y2="479.5"/><line x1="1183.3" y1="483.5" x2="1187.3" y2="483.5"/><line x1="1270.0" y1="483.5" x2="1274.0" y2="483.5"/><line x1="1183.3" y1="487.5" x2="1187.3" y2="487.5"/><line x1="1270.0" y1="487.5" x2="1274.0" y2="487.5"/><line x1="1183.3" y1="491.5" x2="1187.3" y2="491.5"/><line x1="1270.0" y1="491.5" x2="1274.0" y2="491.5"/><line x1="1183.3" y1="495.5" x2="1187.3" y2="495.5"/><line x1="1270.0" y1="495.5" x2="1274.0" y2="495.5"/><line x1="1183.3" y1="499.5" x2="1187.3" y2="499.5"/><line x1="1270.0" y1="499.5" x2="1274.0" y2="499.5"/><line x1="1183.3" y1="503.5" x2="1187.3" y2="503.5"/><line x1="1270.0" y1="503.5" x2="1274.0" y2="503.5"/><line x1="1183.3" y1="507.5" x2="1187.3" y2="507.5"/><line x1="1270.0" y1="507.5" x2="1274.0" y2="507.5"/><line x1="1183.3" y1="511.5" x2="1187.3" y2="511.5"/><line x1="1270.0" y1="511.5" x2="1274.0" y2="511.5"/><line x1="1183.3" y1="515.5" x2="1187.3" y2="515.5"/><line x1="1270.0" y1="515.5" x2="1274.0" y2="515.5"/><line x1="1183.3" y1="519.5" x2="1187.3" y2="519.5"/><line x1="1270.0" y1="519.5" x2="1274.0" y2="519.5"/><line x1="1183.3" y1="523.5" x2="1187.3" y2="523.5"/><line x1="1270.0" y1="523.5" x2="1274.0" y2="523.5"/><line x1="1183.3" y1="527.5" x2="1187.3" y2="527.5"/><line x1="1270.0" y1="527.5" x2="1274.0" y2="527.5"/><line x1="1183.3" y1="531.5" x2="1187.3" y2="531.5"/><line x1="1270.0" y1="531.5" x2="1274.0" y2="531.5"/><line x1="1183.3" y1="535.5" x2="1187.3" y2="535.5"/><line x1="1270.0" y1="535.5" x2="1274.0" y2="535.5"/><line x1="1183.3" y1="539.5" x2="1187.3" y2="539.5"/><line x1="1270.0" y1="539.5" x2="1274.0" y2="539.5"/><line x1="1183.3" y1="543.5" x2="1187.3" y2="543.5"/><line x1="1270.0" y1="543.5" x2="1274.0" y2="543.5"/><line x1="1200.5" y1="327.5" x2="1212.5" y2="327.5"/><line x1="1244.6" y1="327.5" x2="1256.6" y2="327.5"/></g><g fill="#000"><circle cx="1180.3" cy="334.5" r="1.8"/><circle cx="1277.0" cy="334.5" r="1.8"/><circle cx="1180.3" cy="338.5" r="1.8"/><circle cx="1277.0" cy="338.5" r="1.8"/><circle cx="1180.3" cy="342.5" r="1.8"/><circle cx="1277.0" cy="342.5" r="1.8"/><circle cx="1180.3" cy="347.5" r="1.8"/><circle cx="1277.0" cy="347.5" r="1.8"/><circle cx="1180.3" cy="351.5" r="1.8"/><circle cx="1277.0" cy="351.5" r="1.8"/><circle cx="1180.3" cy="355.5" r="1.8"/><circle cx="1277.0" cy="355.5" r="1.8"/><circle cx="1180.3" cy="359.5" r="1.8"/><circle cx="1277.0" cy="359.5" r="1.8"/><circle cx="1180.3" cy="363.5" r="1.8"/><circle cx="1277.0" cy="363.5" r="1.8"/><circle cx="1180.3" cy="367.5" r="1.8"/><circle cx="1277.0" cy="367.5" r="1.8"/><circle cx="1180.3" cy="371.5" r="1.8"/><circle cx="1277.0" cy="371.5" r="1.8"/><circle cx="1180.3" cy="375.5" r="1.8"/><circle cx="1277.0" cy="375.5" r="1.8"/><circle cx="1180.3" cy="379.5" r="1.8"/><circle cx="1277.0" cy="379.5" r="1.8"/><circle cx="1180.3" cy="383.5" r="1.8"/><circle cx="1277.0" cy="383.5" r="1.8"/><circle cx="1180.3" cy="387.5" r="1.8"/><circle cx="1277.0" cy="387.5" r="1.8"/><circle cx="1180.3" cy="391.5" r="1.8"/><circle cx="1277.0" cy="391.5" r="1.8"/><circle cx="1180.3" cy="395.5" r="1.8"/><circle cx="1277.0" cy="395.5" r="1.8"/><circle cx="1180.3" cy="399.5" r="1.8"/><circle cx="1277.0" cy="399.5" r="1.8"/><circle cx="1180.3" cy="403.5" r="1.8"/><circle cx="1277.0" cy="403.5" r="1.8"/><circle cx="1180.3" cy="407.5" r="1.8"/><circle cx="1277.0" cy="407.5" r="1.8"/><circle cx="1180.3" cy="411.5" r="1.8"/><circle cx="1277.0" cy="411.5" r="1.8"/><circle cx="1180.3" cy="415.5" r="1.8"/><circle cx="1277.0" cy="415.5" r="1.8"/><circle cx="1180.3" cy="419.5" r="1.8"/><circle cx="1277.0" cy="419.5" r="1.8"/><circle cx="1180.3" cy="423.5" r="1.8"/><circle cx="1277.0" cy="423.5" r="1.8"/><circle cx="1180.3" cy="427.5" r="1.8"/><circle cx="1277.0" cy="427.5" r="1.8"/><circle cx="1180.3" cy="431.5" r="1.8"/><circle cx="1277.0" cy="431.5" r="1.8"/><circle cx="1180.3" cy="435.5" r="1.8"/><circle cx="1277.0" cy="435.5" r="1.8"/><circle cx="1180.3" cy="439.5" r="1.8"/><circle cx="1277.0" cy="439.5" r="1.8"/><circle cx="1180.3" cy="443.5" r="1.8"/><circle cx="1277.0" cy="443.5" r="1.8"/><circle cx="1180.3" cy="448.5" r="1.8"/><circle cx="1277.0" cy="448.5" r="1.8"/><circle cx="1180.3" cy="452.5" r="1.8"/><circle cx="1277.0" cy="452.5" r="1.8"/><circle cx="1180.3" cy="456.5" r="1.8"/><circle cx="1277.0" cy="456.5" r="1.8"/><circle cx="1180.3" cy="460.5" r="1.8"/><circle cx="1277.0" cy="460.5" r="1.8"/><circle cx="1180.3" cy="464.5" r="1.8"/><circle cx="1277.0" cy="464.5" r="1.8"/><circle cx="1180.3" cy="468.5" r="1.8"/><circle cx="1277.0" cy="468.5" r="1.8"/><circle cx="1180.3" cy="472.5" r="1.8"/><circle cx="1277.0" cy="472.5" r="1.8"/><circle cx="1180.3" cy="476.5" r="1.8"/><circle cx="1277.0" cy="476.5" r="1.8"/><circle cx="1180.3" cy="480.5" r="1.8"/><circle cx="1277.0" cy="480.5" r="1.8"/><circle cx="1180.3" cy="484.5" r="1.8"/><circle cx="1277.0" cy="484.5" r="1.8"/><circle cx="1180.3" cy="488.5" r="1.8"/><circle cx="1277.0" cy="488.5" r="1.8"/><circle cx="1180.3" cy="492.5" r="1.8"/><circle cx="1277.0" cy="492.5" r="1.8"/><circle cx="1180.3" cy="496.5" r="1.8"/><circle cx="1277.0" cy="496.5" r="1.8"/><circle cx="1180.3" cy="500.5" r="1.8"/><circle cx="1277.0" cy="500.5" r="1.8"/><circle cx="1180.3" cy="504.5" r="1.8"/><circle cx="1277.0" cy="504.5" r="1.8"/><circle cx="1180.3" cy="508.5" r="1.8"/><circle cx="1277.0" cy="508.5" r="1.8"/><circle cx="1180.3" cy="512.5" r="1.8"/><circle cx="1277.0" cy="512.5" r="1.8"/><circle cx="1180.3" cy="516.5" r="1.8"/><circle cx="1277.0" cy="516.5" r="1.8"/><circle cx="1180.3" cy="520.5" r="1.8"/><circle cx="1277.0" cy="520.5" r="1.8"/><circle cx="1180.3" cy="524.5" r="1.8"/><circle cx="1277.0" cy="524.5" r="1.8"/><circle cx="1180.3" cy="528.5" r="1.8"/><circle cx="1277.0" cy="528.5" r="1.8"/><circle cx="1180.3" cy="532.5" r="1.8"/><circle cx="1277.0" cy="532.5" r="1.8"/><circle cx="1180.3" cy="536.5" r="1.8"/><circle cx="1277.0" cy="536.5" r="1.8"/><circle cx="1180.3" cy="540.5" r="1.8"/><circle cx="1277.0" cy="540.5" r="1.8"/><circle cx="1180.3" cy="544.5" r="1.8"/><circle cx="1277.0" cy="544.5" r="1.8"/><path d="M1183.3 547.9 h-6 l3 5z"/><path d="M1280.0 547.9 h-6 l3 5z"/></g><g fill="none" stroke="#000" stroke-width="1.2"><circle cx="1115.9" cy="460" r="6.3"/></g><g fill="#000"><circle cx="1113.7" cy="458.0" r="1.6"/><path d="M1110.8 478.5 h6 l-3 5z"/><path d="M1129 478.5 h6 l-3 5z"/></g><g fill="none" stroke="#777" stroke-width=".6"><line x1="1113.8" y1="466" x2="1113.8" y2="480"/><line x1="1122" y1="458.5" x2="1132" y2="458.5"/><line x1="1132" y1="458.5" x2="1132" y2="480"/><rect x="1130.5" y="466" width="3" height="6"/></g><text x="458" y="595.6" font-size="12.6" font-family="Liberation Sans" fill="#000">Test Points</text><text x="458.3" y="607.2" font-size="6" font-family="Liberation Sans" fill="#000">At power on stage, USB download when U1TXD</text><text x="458.3" y="613.5" font-size="6" font-family="Liberation Sans" fill="#000">is pulled to GND or keyin0 is short to keyout0 .</text><rect x="461.5" y="620.5" width="166" height="82" fill="none" stroke="#000" stroke-width="1.3" stroke-dasharray="1.2,.8"/><g fill="none" stroke="#777" stroke-width=".6"><line x1="501" y1="643.5" x2="545" y2="643.5"/><path d="M515 643.5 l1.5 -1.5 l1.5 3 l1.5 -3 l1.5 3 l1.5 -3 l1.5 1.5" stroke="#555"/><line x1="501" y1="662.6" x2="544" y2="662.6"/><circle cx="543" cy="662.6" r="1"/><line x1="501" y1="671.5" x2="544" y2="671.5"/><circle cx="543" cy="671.5" r="1"/><line x1="501" y1="679.6" x2="544" y2="679.6"/><circle cx="543" cy="679.6" r="1"/><line x1="501" y1="687.7" x2="544" y2="687.7"/><circle cx="543" cy="687.7" r="1"/><line x1="501" y1="694.6" x2="544" y2="694.6"/><circle cx="543" cy="694.6" r="1"/><line x1="579" y1="677.5" x2="610" y2="677.5"/><circle cx="588" cy="677.5" r="1"/><line x1="579" y1="684.5" x2="610" y2="684.5"/><circle cx="588" cy="684.5" r="1"/><line x1="579" y1="691.7" x2="610" y2="691.7"/><circle cx="588" cy="691.7" r="1"/></g><g fill="none" stroke="#c0c0c0" stroke-width=".9"><line x1="517" y1="628.5" x2="543" y2="628.5"/><line x1="489" y1="643.5" x2="497" y2="643.5"/><line x1="547" y1="643.5" x2="553" y2="643.5"/><line x1="489" y1="662.6" x2="497" y2="662.6"/><line x1="546" y1="662.6" x2="551" y2="662.6"/><line x1="489" y1="671.5" x2="497" y2="671.5"/><line x1="546" y1="671.5" x2="551" y2="671.5"/><line x1="489" y1="679.6" x2="497" y2="679.6"/><line x1="546" y1="679.6" x2="551" y2="679.6"/><line x1="489" y1="687.7" x2="497" y2="687.7"/><line x1="546" y1="687.7" x2="551" y2="687.7"/><line x1="489" y1="694.6" x2="497" y2="694.6"/><line x1="546" y1="694.6" x2="551" y2="694.6"/><line x1="567" y1="677.5" x2="577" y2="677.5"/><line x1="610" y1="677.5" x2="622" y2="677.5"/><line x1="567" y1="684.5" x2="577" y2="684.5"/><line x1="610" y1="684.5" x2="622" y2="684.5"/><line x1="567" y1="691.7" x2="577" y2="691.7"/><line x1="610" y1="691.7" x2="622" y2="691.7"/><line x1="479" y1="671.5" x2="483" y2="671.5"/><line x1="479" y1="687.7" x2="483" y2="687.7"/><line x1="479" y1="694.6" x2="483" y2="694.6"/></g><text x="466" y="638.5" font-size="4" font-weight="bold" font-family="Liberation Sans" fill="#444">DB UART 1</text><g fill="#000"><rect x="500" y="642.0" width="5.5" height="3" rx=".8" fill="#fff" stroke="#000" stroke-width="1.1"/><rect x="500" y="670.0" width="5.5" height="3" rx=".8" fill="#fff" stroke="#000" stroke-width="1.1"/><rect x="500" y="686.2" width="5.5" height="3" rx=".8" fill="#fff" stroke="#000" stroke-width="1.1"/><rect x="500" y="693.1" width="5.5" height="3" rx=".8" fill="#fff" stroke="#000" stroke-width="1.1"/><circle cx="502.5" cy="662.6" r="1.6"/><circle cx="502.5" cy="679.6" r="1.6"/><circle cx="605.0" cy="677.5" r="1.6"/><rect x="602.5" y="683.0" width="5.5" height="3" rx=".8" fill="#fff" stroke="#000" stroke-width="1.1"/><rect x="602.5" y="690.2" width="5.5" height="3" rx=".8" fill="#fff" stroke="#000" stroke-width="1.1"/></g><g fill="none" stroke="#bbb" stroke-width=".8" stroke-dasharray="1,1"><rect x="493.5" y="758.5" width="68.5" height="32.5"/><rect x="575.5" y="758.5" width="68.5" height="32"/></g><g fill="none" stroke="#999" stroke-width=".8"><rect x="495.0" y="762.5" width="16.5" height="13"/><line x1="495.0" y1="769" x2="511.5" y2="769"/><line x1="503.2" y1="762.5" x2="503.2" y2="775.5"/><circle cx="503.2" cy="769" r="2" fill="#fff"/><rect x="512.0" y="762.5" width="16.5" height="13"/><line x1="512.0" y1="769" x2="528.5" y2="769"/><line x1="520.2" y1="762.5" x2="520.2" y2="775.5"/><circle cx="520.2" cy="769" r="2" fill="#fff"/><rect x="543.0" y="762.5" width="16.5" height="13"/><line x1="543.0" y1="769" x2="559.5" y2="769"/><line x1="551.2" y1="762.5" x2="551.2" y2="775.5"/><circle cx="551.2" cy="769" r="2" fill="#fff"/><line x1="503.6" y1="775" x2="503.6" y2="785"/><line x1="520.0" y1="775" x2="520.0" y2="785"/><line x1="552.0" y1="775" x2="552.0" y2="785"/><rect x="588" y="768" width="3" height="6"/><rect x="607" y="767" width="4" height="5"/><line x1="603" y1="773.5" x2="616" y2="773.5"/><circle cx="627.0" cy="766.5" r="2.2"/><circle cx="627.0" cy="773.0" r="2.2"/><circle cx="627.0" cy="779.5" r="2.2"/><circle cx="635.0" cy="766.5" r="2.2"/><circle cx="635.0" cy="773.0" r="2.2"/><circle cx="635.0" cy="779.5" r="2.2"/></g><g fill="#000"><path d="M503.6 783 l-3 0 l3 4 l3 -4z"/><path d="M520.0 783 l-3 0 l3 4 l3 -4z"/><path d="M552.0 783 l-3 0 l3 4 l3 -4z"/></g><text x="499.5" y="757.5" font-size="5" font-family="Liberation Sans" fill="#333">BD</text><text x="513.5" y="757.5" font-size="5" font-family="Liberation Sans" fill="#333">RF_PA</text><text x="547" y="757.5" font-size="5" font-family="Liberation Sans" fill="#333">EMMC</text><text x="606" y="786" font-size="4.5" font-family="Liberation Sans" fill="#555">logo</text><text x="665" y="767.4" font-size="7.6" font-family="Liberation Sans" fill="#000">MARK POINT</text><g stroke="#666" stroke-width=".8"><line x1="677" y1="783" x2="686" y2="783"/><line x1="693" y1="783" x2="702" y2="783"/><line x1="680" y1="781" x2="683" y2="781"/><line x1="696" y1="781" x2="699" y2="781"/></g><g fill="none" stroke="#888" stroke-width=".8"><rect x="1045.5" y="799.5" width="306.5" height="30.8"/><line x1="1156.5" y1="799.5" x2="1156.5" y2="830.3"/><line x1="1248.4" y1="799.5" x2="1248.4" y2="830.3"/><line x1="1045.5" y1="813.6" x2="1352" y2="813.6"/><line x1="1045.5" y1="821.6" x2="1248.4" y2="821.6"/><line x1="1078.8" y1="813.6" x2="1078.8" y2="830.3"/><line x1="1112.4" y1="813.6" x2="1112.4" y2="830.3"/><line x1="1129.8" y1="813.6" x2="1129.8" y2="830.3"/><line x1="1192.7" y1="821.6" x2="1192.7" y2="830.3"/><line x1="1293.6" y1="813.6" x2="1293.6" y2="830.3"/></g><text x="1048.0" y="808.0" font-size="4.6" font-family="Liberation Sans" fill="#222">COMPANY: TRANSSION HOLDINGS</text><text x="1158.0" y="807.5" font-size="4.6" font-family="Liberation Sans" fill="#222">MODEL:</text><text x="1186.0" y="807.0" font-size="4.6" font-family="Liberation Sans" fill="#222">SPSH</text><text x="1251.0" y="808.0" font-size="4.6" font-family="Liberation Sans" fill="#222">Modified Date:</text><text x="1291.0" y="807.5" font-size="4.6" font-family="Liberation Sans" fill="#222">2019-11-28</text><text x="1048.0" y="819.5" font-size="4.6" font-family="Liberation Sans" fill="#222">DRAWN</text><text x="1089.0" y="819.5" font-size="4.6" font-family="Liberation Sans" fill="#222">gxfy</text><text x="1113.5" y="819.5" font-size="4.6" font-family="Liberation Sans" fill="#222">DATED</text><text x="1158.0" y="819.0" font-size="4.6" font-family="Liberation Sans" fill="#222">TITLE:</text><text x="1178.0" y="819.0" font-size="4.6" font-family="Liberation Sans" fill="#222">10.BB_POWER</text><text x="1048.0" y="827.5" font-size="4.6" font-family="Liberation Sans" fill="#222">CHECKED</text><text x="1113.5" y="827.5" font-size="4.6" font-family="Liberation Sans" fill="#222">DATED</text><text x="1159.0" y="827.5" font-size="4.6" font-family="Liberation Sans" fill="#222">Confidentiality</text><text x="1203.0" y="827.5" font-size="4.6" font-family="Liberation Sans" fill="#222">CONFIDENTIAL</text><text x="1251.0" y="823.5" font-size="4.6" font-family="Liberation Sans" fill="#222">VERSION:</text><text x="1277.0" y="823.0" font-size="4.6" font-family="Liberation Sans" fill="#222">V3.0</text><text x="1298.0" y="824.5" font-size="4.6" font-family="Liberation Sans" fill="#222">SHEET:3</text><text x="1322.0" y="824.5" font-size="4.6" font-family="Liberation Sans" fill="#222">OF</text><text x="1331.0" y="824.5" font-size="4.6" font-family="Liberation Sans" fill="#222">19</text></svg>
<div class="a" style="left:0;top:836px;width:1520px;height:20px;background:linear-gradient(#48698f,#416590 60%,#3f6189)"></div>
<div class="a" style="left:0;top:856px;width:1521px;height:3px;background:#64c7ea"></div>
<div class="tr" style="left:0;top:843.5px;color:#101820">Version:1.0.0.52</div>
<div class="tr" style="left:1286px;top:843px;color:#fff">Current [W6004P Main Schematic diagram]</div></body></html>
